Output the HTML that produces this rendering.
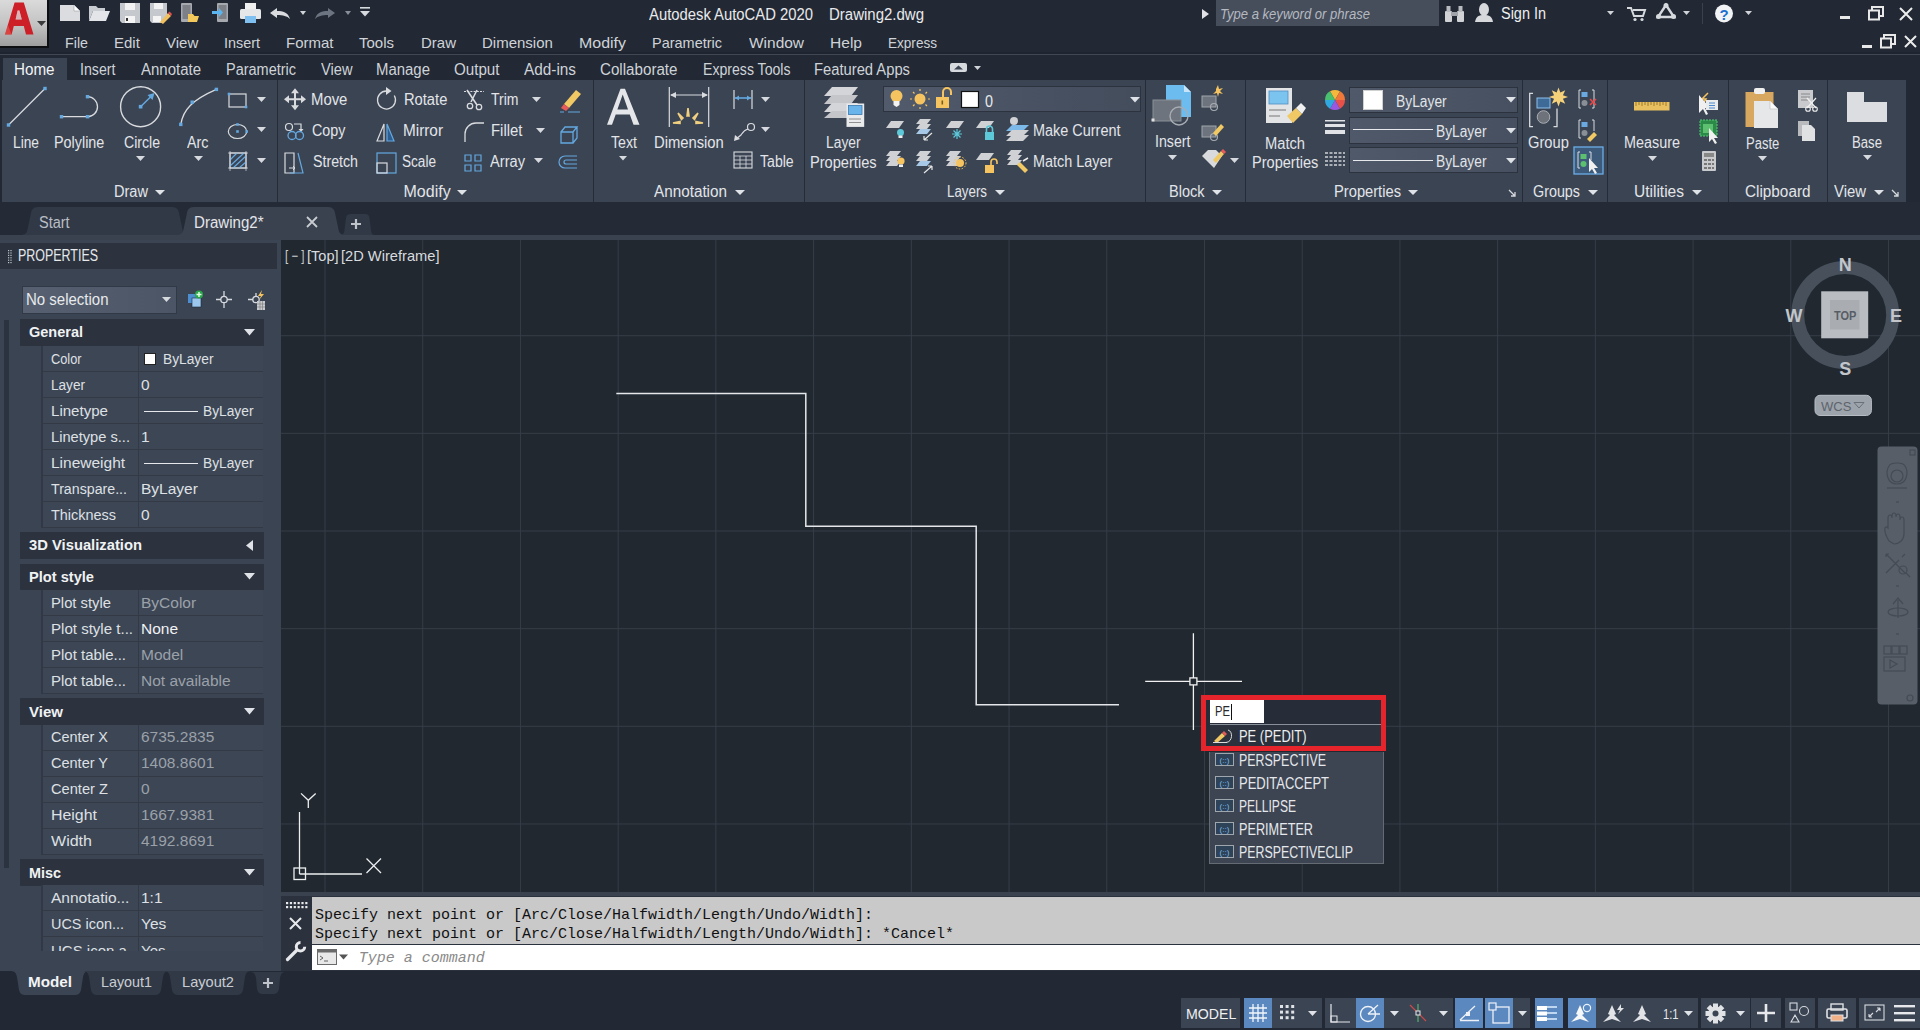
<!DOCTYPE html><html><head><meta charset="utf-8"><title>AutoCAD</title><style>
*{margin:0;padding:0;box-sizing:border-box}
html,body{width:1920px;height:1030px;overflow:hidden;background:#222933}
body{position:relative;font-family:"Liberation Sans",sans-serif}
.a{position:absolute}
.t{position:absolute;white-space:pre}
svg.a{overflow:visible}
</style></head><body>
<div class="a" style="left:0px;top:0px;width:1920px;height:1030px;background:#222934;"></div>
<div class="a" style="left:0px;top:0px;width:1920px;height:54px;background:#222934;"></div>
<div class="a" style="left:0px;top:52px;width:1920px;height:2px;background:#1f2530;"></div>
<div class="a" style="left:0px;top:54px;width:1920px;height:1px;background:#414853;"></div>
<div class="a" style="left:0px;top:0px;width:49px;height:48px;background:linear-gradient(#dadada 0%,#c2c2c2 55%,#9e9e9e 100%);border-right:2px solid #0d0f12;border-bottom:2px solid #0d0f12;"></div>
<svg class="a" style="left:0px;top:0px;" width="48" height="46" viewBox="0 0 48 46"><path d="M5 34.5 L14.6 2.4 H23.8 L33.5 34.5 H26 L23.8 26 H13.8 L11.6 34.5 Z M15.6 19.5 H21.8 L19.4 10.5 H17.6 Z" fill="#cc1f27" fill-rule="evenodd"/><path d="M15.6 19.5 H21.8 L19.4 10.5 H17.6 Z" fill="#e8a0a8" opacity=".55"/><path d="M5 34.5 L8 25 L11.6 34.5Z" fill="#e86a5a" opacity=".5"/></svg>
<svg class="a" style="left:37px;top:21px;" width="9" height="5" viewBox="0 0 9 5"><path d="M0 0H9L4.5 5Z" fill="#3a3a3a"/></svg>
<svg class="a" style="left:60px;top:4px;" width="21" height="17" viewBox="0 0 21 17"><path d="M0 1H14L20 7V17H0Z" fill="#dadcdf"/><path d="M14 1V7H20" fill="#fff" stroke="#9a9da2" stroke-width=".6"/></svg>
<svg class="a" style="left:89px;top:4px;" width="21" height="18" viewBox="0 0 21 18"><path d="M0 2H7L9 4H16V7H4L0 17Z" fill="#c9ccd0"/><path d="M4 7H21L17 17H0Z" fill="#e3e5e8"/></svg>
<svg class="a" style="left:120px;top:3px;" width="20" height="20" viewBox="0 0 20 20"><path d="M0 0H20V20H2L0 18Z" fill="#c5c8cc"/><rect x="5" y="0" width="10" height="7" fill="#f2f2f2"/><rect x="5" y="13" width="10" height="7" fill="#f4f4f4"/><rect x="6" y="15" width="2" height="3" fill="#333"/></svg>
<svg class="a" style="left:150px;top:3px;" width="21" height="20" viewBox="0 0 21 20"><path d="M0 0H17V13L12 20H2L0 18Z" fill="#c5c8cc"/><rect x="4" y="0" width="9" height="6" fill="#f2f2f2"/><rect x="3" y="13" width="8" height="6" fill="#f4f4f4"/><path d="M10 19 L18 10 L21 13 L13 21Z" fill="#f0c060"/><path d="M18 10 L19.5 8.5 L22 11 L21 13Z" fill="#e05050"/></svg>
<svg class="a" style="left:181px;top:3px;" width="18" height="20" viewBox="0 0 18 20"><rect x="0" y="0" width="11" height="19" rx="1" fill="#a6a9ae"/><rect x="1.5" y="2" width="8" height="14" fill="#7d8187"/><path d="M7 11H12L13.5 13H18L16 19H7Z" fill="#f2c95a"/></svg>
<svg class="a" style="left:212px;top:3px;" width="16" height="19" viewBox="0 0 16 19"><rect x="5" y="0" width="11" height="19" rx="1" fill="#a6a9ae"/><rect x="6.5" y="2" width="8" height="14" fill="#7d8187"/><path d="M0 8H7V5L11 9.5L7 14V11H0Z" fill="#5ab4f0"/></svg>
<svg class="a" style="left:240px;top:3px;" width="21" height="20" viewBox="0 0 21 20"><rect x="5" y="0" width="11" height="6" fill="#f0f0f0"/><rect x="0" y="6" width="21" height="10" rx="1.5" fill="#e6e7e9"/><rect x="5" y="13" width="11" height="7" fill="#7fc0f0"/></svg>
<svg class="a" style="left:270px;top:8px;" width="20" height="11" viewBox="0 0 20 11"><path d="M0 5 L7 0 V3 C13 3 18 4 20 11 C17 8 13 7 7 7 V10 Z" fill="#d9dbde"/></svg>
<svg class="a" style="left:299.5px;top:11px;" width="6" height="4" viewBox="0 0 6 4"><path d="M0 0H6L3.0 4Z" fill="#d0d3d8"/></svg>
<svg class="a" style="left:315px;top:8px;" width="20" height="11" viewBox="0 0 20 11"><path d="M20 5 L13 0 V3 C7 3 2 4 0 11 C3 8 7 7 13 7 V10 Z" fill="#6d7481"/></svg>
<svg class="a" style="left:344.5px;top:11px;" width="6" height="4" viewBox="0 0 6 4"><path d="M0 0H6L3.0 4Z" fill="#8a909a"/></svg>
<svg class="a" style="left:360px;top:7px;" width="10" height="10" viewBox="0 0 10 10"><rect x="0" y="0" width="10" height="1.6" fill="#d6d9de"/><path d="M0 4H10L5 9.5Z" fill="#d6d9de"/></svg>
<div class="t" style="left:649px;top:4.86px;line-height:19.20px;font-size:16px;color:#e9eaec;transform:scaleX(0.9265);transform-origin:0 0;">Autodesk AutoCAD 2020</div>
<div class="t" style="left:829px;top:4.86px;line-height:19.20px;font-size:16px;color:#e9eaec;transform:scaleX(0.9370);transform-origin:0 0;">Drawing2.dwg</div>
<svg class="a" style="left:1202px;top:9px;" width="7" height="10" viewBox="0 0 7 10"><path d="M0 0L7 5L0 10Z" fill="#e0e2e5"/></svg>
<div class="a" style="left:1216px;top:0px;width:223px;height:26px;background:#464e5c;"></div>
<div class="t" style="left:1220px;top:5.75px;line-height:16.80px;font-size:14px;color:#b5b9c0;font-style:italic;transform:scaleX(0.9327);transform-origin:0 0;">Type a keyword or phrase</div>
<svg class="a" style="left:1445px;top:6px;" width="19" height="16" viewBox="0 0 19 16"><rect x="0" y="5" width="7" height="11" rx="1" fill="#d0d2d6"/><rect x="12" y="5" width="7" height="11" rx="1" fill="#d0d2d6"/><rect x="1.5" y="0" width="4" height="6" fill="#b8bbc0"/><rect x="13.5" y="0" width="4" height="6" fill="#b8bbc0"/><rect x="6" y="6" width="7" height="4" fill="#a0a4aa"/></svg>
<svg class="a" style="left:1475px;top:3px;" width="18" height="19" viewBox="0 0 18 19"><ellipse cx="9" cy="6.5" rx="5" ry="6.5" fill="#d6d8dc"/><path d="M0 19 C1 13 4 12 9 12 C14 12 17 13 18 19Z" fill="#d6d8dc"/></svg>
<div class="t" style="left:1501px;top:4.36px;line-height:19.20px;font-size:16px;color:#eceef0;transform:scaleX(0.9034);transform-origin:0 0;">Sign In</div>
<svg class="a" style="left:1607px;top:11px;" width="7" height="4" viewBox="0 0 7 4"><path d="M0 0H7L3.5 4Z" fill="#d0d3d8"/></svg>
<svg class="a" style="left:1627px;top:7px;" width="19" height="14" viewBox="0 0 19 14"><path d="M0 1H4L7 9H16L18 3H6" fill="none" stroke="#d6d9de" stroke-width="2"/><circle cx="8" cy="12.5" r="1.6" fill="#d6d9de"/><circle cx="15" cy="12.5" r="1.6" fill="#d6d9de"/></svg>
<svg class="a" style="left:1656px;top:3px;" width="20" height="16" viewBox="0 0 20 16"><path d="M10 2 L2 14 H18 Z" fill="none" stroke="#d6d9de" stroke-width="2.4"/><circle cx="10" cy="2.5" r="2.5" fill="#d6d9de"/><circle cx="2.5" cy="13.5" r="2.5" fill="#d6d9de"/><circle cx="17.5" cy="13.5" r="2.5" fill="#d6d9de"/></svg>
<svg class="a" style="left:1683px;top:11px;" width="7" height="4" viewBox="0 0 7 4"><path d="M0 0H7L3.5 4Z" fill="#d0d3d8"/></svg>
<div class="a" style="left:1702px;top:3px;width:1px;height:21px;background:#3a414d;"></div>
<svg class="a" style="left:1715px;top:4px;" width="18" height="19" viewBox="0 0 18 19"><circle cx="9" cy="9.5" r="9" fill="#f2f3f5"/><text x="9" y="15.5" text-anchor="middle" font-family="Liberation Sans" font-weight="700" font-size="15" fill="#1d6fd0">?</text></svg>
<svg class="a" style="left:1744.5px;top:11px;" width="7" height="4" viewBox="0 0 7 4"><path d="M0 0H7L3.5 4Z" fill="#d0d3d8"/></svg>
<div class="a" style="left:1840px;top:16px;width:10px;height:3px;background:#e8e8e8;"></div>
<svg class="a" style="left:1868px;top:6px;" width="16" height="15" viewBox="0 0 16 15"><rect x="1" y="4.5" width="10" height="9" fill="none" stroke="#e8e8e8" stroke-width="2"/><path d="M4 4.5V1H15V10H11" fill="none" stroke="#e8e8e8" stroke-width="2"/></svg>
<svg class="a" style="left:1899px;top:7px;" width="14" height="14" viewBox="0 0 14 14"><path d="M1 1L13 13M13 1L1 13" stroke="#ececec" stroke-width="2"/></svg>
<div class="a" style="left:1862px;top:44.5px;width:10px;height:3px;background:#e8e8e8;"></div>
<svg class="a" style="left:1880px;top:33.5px;" width="16" height="15" viewBox="0 0 16 15"><rect x="1" y="4.5" width="10" height="9" fill="none" stroke="#e8e8e8" stroke-width="2"/><path d="M4 4.5V1H15V10H11" fill="none" stroke="#e8e8e8" stroke-width="2"/></svg>
<svg class="a" style="left:1904px;top:35px;" width="13" height="13" viewBox="0 0 13 13"><path d="M1 1L12 12M12 1L1 12" stroke="#ececec" stroke-width="2"/></svg>
<div class="t" style="left:65px;top:33.80px;line-height:18.00px;font-size:15px;color:#cfd3d8;transform:scaleX(0.9515);transform-origin:0 0;">File</div>
<div class="t" style="left:114px;top:33.80px;line-height:18.00px;font-size:15px;color:#cfd3d8;">Edit</div>
<div class="t" style="left:166px;top:33.80px;line-height:18.00px;font-size:15px;color:#cfd3d8;">View</div>
<div class="t" style="left:224px;top:33.80px;line-height:18.00px;font-size:15px;color:#cfd3d8;transform:scaleX(0.9596);transform-origin:0 0;">Insert</div>
<div class="t" style="left:286px;top:33.80px;line-height:18.00px;font-size:15px;color:#cfd3d8;">Format</div>
<div class="t" style="left:359px;top:33.80px;line-height:18.00px;font-size:15px;color:#cfd3d8;">Tools</div>
<div class="t" style="left:421px;top:33.80px;line-height:18.00px;font-size:15px;color:#cfd3d8;">Draw</div>
<div class="t" style="left:482px;top:33.80px;line-height:18.00px;font-size:15px;color:#cfd3d8;">Dimension</div>
<div class="t" style="left:579px;top:33.80px;line-height:18.00px;font-size:15px;color:#cfd3d8;transform:scaleX(1.0636);transform-origin:0 0;">Modify</div>
<div class="t" style="left:652px;top:33.80px;line-height:18.00px;font-size:15px;color:#cfd3d8;transform:scaleX(0.9651);transform-origin:0 0;">Parametric</div>
<div class="t" style="left:749px;top:33.80px;line-height:18.00px;font-size:15px;color:#cfd3d8;transform:scaleX(1.0307);transform-origin:0 0;">Window</div>
<div class="t" style="left:830px;top:33.80px;line-height:18.00px;font-size:15px;color:#cfd3d8;transform:scaleX(1.0370);transform-origin:0 0;">Help</div>
<div class="t" style="left:888px;top:33.80px;line-height:18.00px;font-size:15px;color:#cfd3d8;transform:scaleX(0.9043);transform-origin:0 0;">Express</div>
<div class="a" style="left:0px;top:56px;width:1920px;height:24px;background:#222935;"></div>
<div class="a" style="left:3px;top:58px;width:64px;height:22px;background:#3b4453;"></div>
<div class="t" style="left:14px;top:59.86px;line-height:19.20px;font-size:16px;color:#f2f4f6;transform:scaleX(0.9488);transform-origin:0 0;">Home</div>
<div class="t" style="left:80px;top:59.86px;line-height:19.20px;font-size:16px;color:#cfd3d8;transform:scaleX(0.8872);transform-origin:0 0;">Insert</div>
<div class="t" style="left:140.5px;top:59.86px;line-height:19.20px;font-size:16px;color:#cfd3d8;transform:scaleX(0.9366);transform-origin:0 0;">Annotate</div>
<div class="t" style="left:226px;top:59.86px;line-height:19.20px;font-size:16px;color:#cfd3d8;transform:scaleX(0.9049);transform-origin:0 0;">Parametric</div>
<div class="t" style="left:320.5px;top:59.86px;line-height:19.20px;font-size:16px;color:#cfd3d8;transform:scaleX(0.9159);transform-origin:0 0;">View</div>
<div class="t" style="left:376px;top:59.86px;line-height:19.20px;font-size:16px;color:#cfd3d8;transform:scaleX(0.9338);transform-origin:0 0;">Manage</div>
<div class="t" style="left:454px;top:59.86px;line-height:19.20px;font-size:16px;color:#cfd3d8;transform:scaleX(0.9473);transform-origin:0 0;">Output</div>
<div class="t" style="left:524px;top:59.86px;line-height:19.20px;font-size:16px;color:#cfd3d8;transform:scaleX(0.9585);transform-origin:0 0;">Add-ins</div>
<div class="t" style="left:600px;top:59.86px;line-height:19.20px;font-size:16px;color:#cfd3d8;transform:scaleX(0.9471);transform-origin:0 0;">Collaborate</div>
<div class="t" style="left:702.5px;top:59.86px;line-height:19.20px;font-size:16px;color:#cfd3d8;transform:scaleX(0.8811);transform-origin:0 0;">Express Tools</div>
<div class="t" style="left:814px;top:59.86px;line-height:19.20px;font-size:16px;color:#cfd3d8;transform:scaleX(0.9224);transform-origin:0 0;">Featured Apps</div>
<svg class="a" style="left:950px;top:63px;" width="18" height="10" viewBox="0 0 18 10"><rect x="0" y="0" width="17" height="9" rx="2" fill="#d6d9de"/><path d="M4 6.5L8.5 2.5L13 6.5Z" fill="#3b4453"/></svg>
<svg class="a" style="left:973.5px;top:66px;" width="7" height="4" viewBox="0 0 7 4"><path d="M0 0H7L3.5 4Z" fill="#d0d3d8"/></svg>
<div class="a" style="left:2px;top:80px;width:1904px;height:122px;background:#3b4453;"></div>
<div class="a" style="left:277px;top:80px;width:1px;height:122px;background:#252b37;"></div>
<div class="a" style="left:593px;top:80px;width:1px;height:122px;background:#252b37;"></div>
<div class="a" style="left:804px;top:80px;width:1px;height:122px;background:#252b37;"></div>
<div class="a" style="left:1145px;top:80px;width:1px;height:122px;background:#252b37;"></div>
<div class="a" style="left:1245px;top:80px;width:1px;height:122px;background:#252b37;"></div>
<div class="a" style="left:1522px;top:80px;width:1px;height:122px;background:#252b37;"></div>
<div class="a" style="left:1607px;top:80px;width:1px;height:122px;background:#252b37;"></div>
<div class="a" style="left:1728px;top:80px;width:1px;height:122px;background:#252b37;"></div>
<div class="a" style="left:1827px;top:80px;width:1px;height:122px;background:#252b37;"></div>
<div class="t" style="left:114px;top:182.36px;line-height:19.20px;font-size:16px;color:#e2e5e9;transform:scaleX(0.9105);transform-origin:0 0;">Draw</div>
<svg class="a" style="left:155px;top:190px;" width="10" height="5" viewBox="0 0 10 5"><path d="M0 0H10L5.0 5Z" fill="#dfe2e6"/></svg>
<div class="t" style="left:403.5px;top:182.36px;line-height:19.20px;font-size:16px;color:#e2e5e9;">Modify</div>
<svg class="a" style="left:457px;top:190px;" width="10" height="5" viewBox="0 0 10 5"><path d="M0 0H10L5.0 5Z" fill="#dfe2e6"/></svg>
<div class="t" style="left:654px;top:182.36px;line-height:19.20px;font-size:16px;color:#e2e5e9;transform:scaleX(0.9541);transform-origin:0 0;">Annotation</div>
<svg class="a" style="left:735px;top:190px;" width="10" height="5" viewBox="0 0 10 5"><path d="M0 0H10L5.0 5Z" fill="#dfe2e6"/></svg>
<div class="t" style="left:947px;top:182.36px;line-height:19.20px;font-size:16px;color:#e2e5e9;transform:scaleX(0.8328);transform-origin:0 0;">Layers</div>
<svg class="a" style="left:995px;top:190px;" width="10" height="5" viewBox="0 0 10 5"><path d="M0 0H10L5.0 5Z" fill="#dfe2e6"/></svg>
<div class="t" style="left:1169px;top:182.36px;line-height:19.20px;font-size:16px;color:#e2e5e9;transform:scaleX(0.9073);transform-origin:0 0;">Block</div>
<svg class="a" style="left:1212px;top:190px;" width="10" height="5" viewBox="0 0 10 5"><path d="M0 0H10L5.0 5Z" fill="#dfe2e6"/></svg>
<div class="t" style="left:1334px;top:182.36px;line-height:19.20px;font-size:16px;color:#e2e5e9;transform:scaleX(0.9188);transform-origin:0 0;">Properties</div>
<svg class="a" style="left:1408px;top:190px;" width="10" height="5" viewBox="0 0 10 5"><path d="M0 0H10L5.0 5Z" fill="#dfe2e6"/></svg>
<div class="t" style="left:1533px;top:182.36px;line-height:19.20px;font-size:16px;color:#e2e5e9;transform:scaleX(0.8958);transform-origin:0 0;">Groups</div>
<svg class="a" style="left:1587.5px;top:190px;" width="10" height="5" viewBox="0 0 10 5"><path d="M0 0H10L5.0 5Z" fill="#dfe2e6"/></svg>
<div class="t" style="left:1634px;top:182.36px;line-height:19.20px;font-size:16px;color:#e2e5e9;transform:scaleX(0.9697);transform-origin:0 0;">Utilities</div>
<svg class="a" style="left:1692px;top:190px;" width="10" height="5" viewBox="0 0 10 5"><path d="M0 0H10L5.0 5Z" fill="#dfe2e6"/></svg>
<div class="t" style="left:1745px;top:182.36px;line-height:19.20px;font-size:16px;color:#e2e5e9;transform:scaleX(0.9564);transform-origin:0 0;">Clipboard</div>
<div class="t" style="left:1834px;top:182.36px;line-height:19.20px;font-size:16px;color:#e2e5e9;transform:scaleX(0.9305);transform-origin:0 0;">View</div>
<svg class="a" style="left:1874px;top:190px;" width="10" height="5" viewBox="0 0 10 5"><path d="M0 0H10L5.0 5Z" fill="#dfe2e6"/></svg>
<svg class="a" style="left:1509px;top:190px;" width="7" height="7" viewBox="0 0 7 7"><path d="M0 0L6 6M6 2V6H2" stroke="#d6d9de" stroke-width="1.3" fill="none"/></svg>
<svg class="a" style="left:1892px;top:190px;" width="7" height="7" viewBox="0 0 7 7"><path d="M0 0L6 6M6 2V6H2" stroke="#d6d9de" stroke-width="1.3" fill="none"/></svg>
<svg class="a" style="left:0px;top:80px;" width="280" height="100" viewBox="0 0 280 100">
      <line x1="8.5" y1="45" x2="45" y2="8.5" stroke="#d9dbdf" stroke-width="1.3"/><rect x="6.8" y="43.3" width="3.4" height="3.4" fill="#64a8e0"/><rect x="43.3" y="6.8" width="3.4" height="3.4" fill="#64a8e0"/>
      <path d="M61.5 36.7H87.5A10 10 0 0 0 87.5 16.7" fill="none" stroke="#d9dbdf" stroke-width="1.3"/><rect x="59.8" y="35.0" width="3.4" height="3.4" fill="#64a8e0"/><rect x="85.8" y="35.0" width="3.4" height="3.4" fill="#64a8e0"/><rect x="85.8" y="15.0" width="3.4" height="3.4" fill="#64a8e0"/>
      <circle cx="140.6" cy="26.7" r="20" fill="none" stroke="#d9dbdf" stroke-width="1.4"/>
      <line x1="140.6" y1="26.7" x2="152" y2="15.5" stroke="#64a8e0" stroke-width="1.5"/><path d="M154.5 13 L147.5 15 L152.5 20 Z" fill="#64a8e0"/><rect x="138.79999999999998" y="24.9" width="3.6" height="3.6" fill="#64a8e0"/>
      <path d="M180.8 44.4 C183 30 192 20 216.4 9.4" fill="none" stroke="#d9dbdf" stroke-width="1.3"/><rect x="179.10000000000002" y="42.699999999999996" width="3.4" height="3.4" fill="#64a8e0"/><rect x="190.5" y="20.5" width="3.4" height="3.4" fill="#64a8e0"/><rect x="214.70000000000002" y="7.7" width="3.4" height="3.4" fill="#64a8e0"/>
      <rect x="229" y="14" width="17" height="13" fill="none" stroke="#d9dbdf" stroke-width="1.2"/><rect x="227.7" y="12.7" width="2.6" height="2.6" fill="#64a8e0"/><rect x="244.7" y="25.7" width="2.6" height="2.6" fill="#64a8e0"/>
      <ellipse cx="237.5" cy="51.5" rx="9.2" ry="7" fill="none" stroke="#d9dbdf" stroke-width="1.2"/><rect x="236.2" y="43.2" width="2.6" height="2.6" fill="#64a8e0"/><rect x="236.2" y="50.2" width="2.6" height="2.6" fill="#64a8e0"/><rect x="245.39999999999998" y="50.2" width="2.6" height="2.6" fill="#64a8e0"/>
      <rect x="230" y="73" width="16" height="15" fill="none" stroke="#d9dbdf" stroke-width="1.2"/>
      <path d="M230 86L244 73M233 88L246 76M230 80L237 73M239 88L246 82" stroke="#64a8e0" stroke-width="1.2"/>
      <path d="M228 73H248M228 88H248M230 71V91M246 71V91" stroke="#d9dbdf" stroke-width=".7"/>
    </svg>
<div class="t" style="left:13.4px;top:132.86px;line-height:19.20px;font-size:16px;color:#e2e5e9;transform:scaleX(0.8595);transform-origin:0 0;">Line</div>
<div class="t" style="left:54.4px;top:132.86px;line-height:19.20px;font-size:16px;color:#e2e5e9;transform:scaleX(0.8977);transform-origin:0 0;">Polyline</div>
<div class="t" style="left:123.7px;top:132.86px;line-height:19.20px;font-size:16px;color:#e2e5e9;transform:scaleX(0.8804);transform-origin:0 0;">Circle</div>
<div class="t" style="left:187.4px;top:132.86px;line-height:19.20px;font-size:16px;color:#e2e5e9;transform:scaleX(0.8917);transform-origin:0 0;">Arc</div>
<svg class="a" style="left:136px;top:155.5px;" width="9" height="5" viewBox="0 0 9 5"><path d="M0 0H9L4.5 5Z" fill="#d6d9de"/></svg>
<svg class="a" style="left:193.5px;top:155.5px;" width="9" height="5" viewBox="0 0 9 5"><path d="M0 0H9L4.5 5Z" fill="#d6d9de"/></svg>
<svg class="a" style="left:256.5px;top:97px;" width="9" height="5" viewBox="0 0 9 5"><path d="M0 0H9L4.5 5Z" fill="#d6d9de"/></svg>
<svg class="a" style="left:256.5px;top:127px;" width="9" height="5" viewBox="0 0 9 5"><path d="M0 0H9L4.5 5Z" fill="#d6d9de"/></svg>
<svg class="a" style="left:256.5px;top:158px;" width="9" height="5" viewBox="0 0 9 5"><path d="M0 0H9L4.5 5Z" fill="#d6d9de"/></svg>
<svg class="a" style="left:278px;top:80px;" width="320" height="100" viewBox="0 0 320 100">
      <path d="M8 19.3H26M17 10.3V28.3" stroke="#d9dbdf" stroke-width="2"/>
      <path d="M6 19.3L11 15.3V23.3Z M28 19.3L23 15.3V23.3Z M17 8.3L13 13.3H21Z M17 30.3L13 25.3H21Z" fill="#d9dbdf"/>
      <path d="M116.3 15.5 A9 9 0 1 1 108.5 11" fill="none" stroke="#d9dbdf" stroke-width="1.3"/><path d="M108 7 L113.5 11 L108 15Z" fill="#d9dbdf"/>
      <path d="M186 11.5H206" stroke="#d9dbdf" stroke-width="1.2" stroke-dasharray="2 1.2"/><path d="M189 10 L199 25 M199 10 L193 22" stroke="#d9dbdf" stroke-width="1.6"/><circle cx="192" cy="26" r="2.7" fill="none" stroke="#d9dbdf" stroke-width="1.3"/><circle cx="201" cy="27" r="2.7" fill="none" stroke="#d9dbdf" stroke-width="1.3"/>
      <path d="M286 24 L298 10 L303 14 L291 28Z" fill="#f0c864"/><path d="M283 28 L286 24 L291 28 L288 31Z" fill="#e85a5a"/><path d="M282 32H286M290 32H302" stroke="#64a8e0" stroke-width="1.2"/>
      <circle cx="11" cy="47" r="3.5" fill="none" stroke="#d9dbdf" stroke-width="1.2"/><path d="M16 44H23V51" fill="none" stroke="#d9dbdf" stroke-width="1.2"/><path d="M20.5 49L23 52L25.5 49Z" fill="#d9dbdf"/>
      <circle cx="14" cy="55.5" r="4" fill="none" stroke="#64a8e0" stroke-width="1.3"/><circle cx="21.5" cy="55.5" r="4" fill="none" stroke="#64a8e0" stroke-width="1.3"/>
      <path d="M99 61L106 44V61Z" fill="none" stroke="#d9dbdf" stroke-width="1.2"/><path d="M109 44L116 61H109Z" fill="#2e5d8f" stroke="#64a8e0" stroke-width="1.2"/>
      <path d="M187 62V54A11 11 0 0 1 198 43H206" fill="none" stroke="#d9dbdf" stroke-width="1.3"/>
      <path d="M283 52H295V63H283Z M283 52L287 47H299L295 52 M299 47V58L295 63" fill="none" stroke="#64a8e0" stroke-width="1.3"/>
      <path d="M7 93V73H16V93Z" fill="none" stroke="#d9dbdf" stroke-width="1.2"/><path d="M20 73L25 93H12" fill="none" stroke="#64a8e0" stroke-width="1.2"/><path d="M11 88H17L15 86M17 88L15 90" stroke="#d9dbdf" stroke-width="1" fill="none"/>
      <rect x="99" y="73" width="19" height="20" fill="none" stroke="#64a8e0" stroke-width="1.2"/><rect x="99" y="83" width="10" height="10" fill="none" stroke="#d9dbdf" stroke-width="1.2"/>
      <path d="M187 75h6v6h-6zM197 75h6v6h-6zM187 85h6v6h-6zM197 85h6v6h-6z" fill="none" stroke="#64a8e0" stroke-width="1.2"/>
      <path d="M299 76H287A6 6 0 0 0 287 88H299 M299 80H288A2 2 0 0 0 288 84H299" fill="none" stroke="#64a8e0" stroke-width="1.2"/>
    </svg>
<div class="t" style="left:311.3px;top:90.36px;line-height:19.20px;font-size:16px;color:#e2e5e9;transform:scaleX(0.9304);transform-origin:0 0;">Move</div>
<div class="t" style="left:403.5px;top:90.36px;line-height:19.20px;font-size:16px;color:#e2e5e9;transform:scaleX(0.9185);transform-origin:0 0;">Rotate</div>
<div class="t" style="left:491px;top:90.36px;line-height:19.20px;font-size:16px;color:#e2e5e9;transform:scaleX(0.8761);transform-origin:0 0;">Trim</div>
<div class="t" style="left:312.3px;top:121.36px;line-height:19.20px;font-size:16px;color:#e2e5e9;transform:scaleX(0.8940);transform-origin:0 0;">Copy</div>
<div class="t" style="left:402.7px;top:121.36px;line-height:19.20px;font-size:16px;color:#e2e5e9;transform:scaleX(0.9577);transform-origin:0 0;">Mirror</div>
<div class="t" style="left:491.3px;top:121.36px;line-height:19.20px;font-size:16px;color:#e2e5e9;transform:scaleX(0.9295);transform-origin:0 0;">Fillet</div>
<div class="t" style="left:312.7px;top:152.36px;line-height:19.20px;font-size:16px;color:#e2e5e9;transform:scaleX(0.8878);transform-origin:0 0;">Stretch</div>
<div class="t" style="left:402px;top:152.36px;line-height:19.20px;font-size:16px;color:#e2e5e9;transform:scaleX(0.8493);transform-origin:0 0;">Scale</div>
<div class="t" style="left:490px;top:152.36px;line-height:19.20px;font-size:16px;color:#e2e5e9;transform:scaleX(0.9154);transform-origin:0 0;">Array</div>
<svg class="a" style="left:532px;top:97px;" width="9" height="5" viewBox="0 0 9 5"><path d="M0 0H9L4.5 5Z" fill="#d6d9de"/></svg>
<svg class="a" style="left:536px;top:128px;" width="9" height="5" viewBox="0 0 9 5"><path d="M0 0H9L4.5 5Z" fill="#d6d9de"/></svg>
<svg class="a" style="left:534px;top:158px;" width="9" height="5" viewBox="0 0 9 5"><path d="M0 0H9L4.5 5Z" fill="#d6d9de"/></svg>
<svg class="a" style="left:593px;top:80px;" width="215" height="100" viewBox="0 0 215 100">
      <path d="M14 44.7 L27.5 8.7 H32 L46.5 44.7 H40.5 L36.8 34.5 H22.7 L19 44.7 Z M24.4 29.5 H35 L29.7 14.5 Z" fill="#e4e6e9"/>
      <path d="M76.3 7V47M115.7 7V47" stroke="#d9dbdf" stroke-width="1.2"/>
      <path d="M78 15H114" stroke="#d9dbdf" stroke-width="1.2"/><path d="M77 15L83 12V18Z M115 15L109 12V18Z" fill="#d9dbdf"/>
      <path d="M95 28L96 36H94Z M85 33L90 38L88.5 39.5Z M105 33L100 38L101.5 39.5Z M80 43L87 41.5V43.5Z M110 43L103 41.5V43.5Z" fill="#f0d080" stroke="#f0d080" stroke-width="1.6"/>
      <path d="M141 10V29M159 10V29" stroke="#d9dbdf" stroke-width="1.2"/><path d="M142 18H158" stroke="#64a8e0" stroke-width="1.6"/><path d="M142 18L146 15.5V20.5Z M158 18L154 15.5V20.5Z" fill="#64a8e0"/>
      <circle cx="158" cy="47" r="3.5" fill="none" stroke="#d9dbdf" stroke-width="1.2"/><path d="M155 49 C151 50 150 52 148 55 L143 59" fill="none" stroke="#d9dbdf" stroke-width="1.2"/><path d="M141 61 L142 55 L147 59 Z" fill="#d9dbdf"/>
      <rect x="141" y="72" width="18" height="16" fill="none" stroke="#d9dbdf" stroke-width="1.1"/><path d="M141 76H159M141 80H159M141 84H159M147 76V88M153 76V88" stroke="#d9dbdf" stroke-width=".8"/>
    </svg>
<div class="t" style="left:611px;top:133.36px;line-height:19.20px;font-size:16px;color:#e2e5e9;transform:scaleX(0.8860);transform-origin:0 0;">Text</div>
<svg class="a" style="left:619px;top:156px;" width="8" height="4.5" viewBox="0 0 8 4.5"><path d="M0 0H8L4.0 4.5Z" fill="#d6d9de"/></svg>
<div class="t" style="left:653.8px;top:133.36px;line-height:19.20px;font-size:16px;color:#e2e5e9;transform:scaleX(0.9234);transform-origin:0 0;">Dimension</div>
<div class="t" style="left:759.8px;top:152.36px;line-height:19.20px;font-size:16px;color:#e2e5e9;transform:scaleX(0.8810);transform-origin:0 0;">Table</div>
<svg class="a" style="left:761px;top:97px;" width="9" height="5" viewBox="0 0 9 5"><path d="M0 0H9L4.5 5Z" fill="#d6d9de"/></svg>
<svg class="a" style="left:761px;top:127px;" width="9" height="5" viewBox="0 0 9 5"><path d="M0 0H9L4.5 5Z" fill="#d6d9de"/></svg>
<svg class="a" style="left:804px;top:80px;" width="345" height="100" viewBox="0 0 345 100">
      <path d="M28 7 H54 L47 16 H20Z" fill="#d3d5d8"/><path d="M28 15 H54 L47 24 H20Z" fill="#c4c6ca"/><path d="M28 23 H54 L47 32 H20Z" fill="#d3d5d8"/><path d="M28 31 H50 L44 38 H20Z" fill="#c4c6ca"/>
      <rect x="42.5" y="23.5" width="17.7" height="23.4" fill="#e9eaec"/><rect x="44.5" y="25.5" width="13.5" height="9" fill="#6ab4ec" stroke="#3a78b0" stroke-width=".8"/><path d="M45 39H57M45 42.5H57" stroke="#777" stroke-width=".8"/>
    </svg>
<div class="t" style="left:826.4px;top:133.16px;line-height:19.20px;font-size:16px;color:#e2e5e9;transform:scaleX(0.8643);transform-origin:0 0;">Layer</div>
<div class="t" style="left:810px;top:152.86px;line-height:19.20px;font-size:16px;color:#e2e5e9;transform:scaleX(0.9133);transform-origin:0 0;">Properties</div>
<div class="a" style="left:883px;top:86px;width:258px;height:26px;background:linear-gradient(90deg,#515b6b,#465060 70%,#444d5c);border:1px solid #2c333f;"></div>
<svg class="a" style="left:886px;top:86px;" width="100" height="26" viewBox="0 0 100 26">
      <circle cx="10.5" cy="10" r="6" fill="#f5c460"/><path d="M7.5 15H13.5V19L10.5 21L7.5 19Z" fill="#f2f2f2"/>
      <circle cx="34" cy="13" r="5.5" fill="#f5c460"/><path d="M34 3V5M34 21V23M24 13H26M42 13H44M27 6L28.5 7.5M41 6L39.5 7.5M27 20L28.5 18.5M41 20L39.5 18.5" stroke="#f5c460" stroke-width="1.2"/>
      <rect x="50" y="11" width="13" height="11" fill="#f5c460"/><path d="M57 11V6A4 4 0 0 1 65 6V9" fill="none" stroke="#f5c460" stroke-width="2"/><rect x="55.5" y="14.5" width="1.6" height="4" fill="#7a5a20"/>
      <rect x="75.5" y="5.5" width="17" height="16" fill="#fff" stroke="#111" stroke-width="1.2"/>
    </svg>
<div class="t" style="left:985px;top:91.86px;line-height:19.20px;font-size:16px;color:#e8eaed;transform:scaleX(0.8982);transform-origin:0 0;">0</div>
<svg class="a" style="left:1130px;top:97px;" width="10" height="5.5" viewBox="0 0 10 5.5"><path d="M0 0H10L5.0 5.5Z" fill="#dfe2e6"/></svg>
<svg class="a" style="left:884.5px;top:115px;" width="270" height="65" viewBox="0 0 270 65">
      <path d="M6 6 H19 L14 13 H1Z" fill="#cfd1d4"/><circle cx="15.5" cy="17.5" r="3.5" fill="#5cc8d8"/><path d="M13.5 20.5H17.5V23H13.5Z" fill="#eee"/>
      <path d="M35 4 H46 L42 9 H31Z M35 9 H46 L42 14 H31Z" fill="#cfd1d4"/><path d="M35 14 H46 L42 19 H31Z" fill="#a8c8e8"/><path d="M39 25 L47 18M39 25V21M39 25H43" stroke="#e6e6e6" stroke-width="1.2" fill="none"/>
      <path d="M66 6 H79 L74 13 H61Z" fill="#cfd1d4"/><path d="M72 14V24M67 19H77M68.5 15.5L75.5 22.5M75.5 15.5L68.5 22.5" stroke="#5cc8d8" stroke-width="1.2"/>
      <path d="M96 6 H109 L104 13 H91Z" fill="#cfd1d4"/><rect x="100" y="17" width="9" height="8" fill="#5cc8d8"/><path d="M101.5 17V14A3 3 0 0 1 107.5 14V17" fill="none" stroke="#5cc8d8" stroke-width="1.6"/>
      <circle cx="129" cy="6" r="4" fill="#cfd1d4"/><path d="M127 10 H144 L138 16 H121Z" fill="#7cb8e8"/><path d="M127 15 H144 L138 21 H121Z M127 20 H144 L138 26 H121Z" fill="#cfd1d4"/>
      <path d="M5 36 H16 L12 41 H1Z M5 41 H16 L12 46 H1Z" fill="#cfd1d4"/><path d="M5 46 H16 L12 51 H1Z" fill="#cfd1d4"/><circle cx="16" cy="46" r="3.6" fill="#f5c460"/><path d="M14 49.5H18V52H14Z" fill="#eee"/>
      <path d="M35 36 H46 L42 41 H31Z M35 41 H46 L42 46 H31Z" fill="#cfd1d4"/><path d="M35 46 H46 L42 51 H31Z" fill="#a8c8e8"/><path d="M39 58 L47 51M47 51V55M47 51H43" stroke="#e6e6e6" stroke-width="1.2" fill="none"/>
      <path d="M65 36 H76 L72 41 H61Z M65 41 H76 L72 46 H61Z" fill="#cfd1d4"/><path d="M65 46 H76 L72 51 H61Z" fill="#cfd1d4"/><circle cx="75" cy="48" r="4" fill="#f5c460"/><circle cx="75" cy="48" r="6" fill="none" stroke="#f5c460" stroke-width="1" stroke-dasharray="1.5 1.5"/>
      <path d="M96 38 H109 L104 45 H91Z" fill="#cfd1d4"/><rect x="100" y="50" width="9" height="8" fill="#f5c460"/><path d="M106 50V47A3 3 0 0 1 112 47V49" fill="none" stroke="#f5c460" stroke-width="1.6"/>
      <path d="M126 35 H137 L133 40 H122Z M126 40 H137 L133 45 H122Z" fill="#cfd1d4"/><path d="M126 45 H137 L133 50 H122Z" fill="#cfd1d4"/><path d="M135 47L143 55L140 58L132 50Z" fill="#f0c864"/><path d="M138 46L143 43" stroke="#eee" stroke-width="1.5"/>
    </svg>
<div class="t" style="left:1033.3px;top:121.36px;line-height:19.20px;font-size:16px;color:#e2e5e9;transform:scaleX(0.9028);transform-origin:0 0;">Make Current</div>
<div class="t" style="left:1033.3px;top:152.36px;line-height:19.20px;font-size:16px;color:#e2e5e9;transform:scaleX(0.9007);transform-origin:0 0;">Match Layer</div>
<svg class="a" style="left:1146px;top:80px;" width="100" height="100" viewBox="0 0 100 100">
      <path d="M20 5 H38 L45 12 V37 H20Z" fill="#6cbcf0"/><path d="M38 5 V12 H45" fill="#c8e4f8"/>
      <rect x="7" y="20" width="28" height="21" fill="#6e747d" stroke="#8a9098" stroke-width="1"/>
      <circle cx="33" cy="36" r="9" fill="none" stroke="#a8adb4" stroke-width="1.4"/><rect x="5.5" y="38.5" width="3" height="3" fill="#e0e0e0"/>
      <rect x="56" y="16" width="14" height="11" fill="#6e747d" stroke="#a0a5ac" stroke-width="1"/><circle cx="68" cy="27" r="3.5" fill="none" stroke="#a8adb4" stroke-width="1.1"/><path d="M70 9L72 5L73 9L77 8L74 11L77 14L73 13L72 17L71 13L67 14L70 11Z" fill="#f5c460"/>
      <rect x="56" y="46" width="14" height="11" fill="#6e747d" stroke="#a0a5ac" stroke-width="1"/><circle cx="68" cy="57" r="3.5" fill="none" stroke="#a8adb4" stroke-width="1.1"/><path d="M67 53L75 44L78 47L70 56Z" fill="#f0c864"/>
      <path d="M56 76 L62 70 H70 L76 76 L68 88 Z" fill="#d8dadd"/><path d="M67 80L75 71L78 74L70 83Z" fill="#f0c864"/><path d="M75 71L77 69L80 72L78 74Z" fill="#e85a5a"/>
    </svg>
<div class="t" style="left:1154.5px;top:132.36px;line-height:19.20px;font-size:16px;color:#e2e5e9;transform:scaleX(0.8847);transform-origin:0 0;">Insert</div>
<svg class="a" style="left:1168px;top:154.5px;" width="9" height="5" viewBox="0 0 9 5"><path d="M0 0H9L4.5 5Z" fill="#d6d9de"/></svg>
<svg class="a" style="left:1229.5px;top:158px;" width="9" height="5" viewBox="0 0 9 5"><path d="M0 0H9L4.5 5Z" fill="#d6d9de"/></svg>
<svg class="a" style="left:1250px;top:80px;" width="100" height="100" viewBox="0 0 100 100">
      <rect x="16" y="8" width="26" height="35" fill="#e3e4e6"/><rect x="19" y="11" width="19" height="13" fill="#7cc4f0" stroke="#4e8ec0" stroke-width=".8"/>
      <path d="M19 30H36M19 36H30" stroke="#777" stroke-width="1"/>
      <path d="M37 36 L46 28 L52 34 L43 43Z" fill="#f0c864"/><path d="M46 28L51 23L56 28L52 34Z" fill="#f0f0f0"/>
    </svg>
<div class="t" style="left:1264.7px;top:133.66px;line-height:19.20px;font-size:16px;color:#e2e5e9;transform:scaleX(0.9179);transform-origin:0 0;">Match</div>
<div class="t" style="left:1251.7px;top:153.46px;line-height:19.20px;font-size:16px;color:#e2e5e9;transform:scaleX(0.9092);transform-origin:0 0;">Properties</div>
<svg class="a" style="left:1324px;top:89px;" width="22" height="22" viewBox="0 0 22 22"><g transform="translate(11,11)"><path d="M0 0L-5.00 -8.66A10 10 0 0 1 5.00 -8.66Z" fill="#f5b83d"/><path d="M0 0L5.00 -8.66A10 10 0 0 1 10.00 0.00Z" fill="#f07838"/><path d="M0 0L10.00 0.00A10 10 0 0 1 5.00 8.66Z" fill="#e8504a"/><path d="M0 0L5.00 8.66A10 10 0 0 1 -5.00 8.66Z" fill="#9858e0"/><path d="M0 0L-5.00 8.66A10 10 0 0 1 -10.00 0.00Z" fill="#30a8e0"/><path d="M0 0L-10.00 0.00A10 10 0 0 1 -5.00 -8.66Z" fill="#48c070"/></g></svg>
<svg class="a" style="left:1325px;top:119px;" width="21" height="22" viewBox="0 0 21 22"><rect x="0" y="1" width="20" height="1.5" fill="#e0e2e5"/><rect x="0" y="5" width="20" height="3" fill="#e0e2e5"/><rect x="0" y="11" width="20" height="4" fill="#e0e2e5"/></svg>
<svg class="a" style="left:1325px;top:152px;" width="20" height="16" viewBox="0 0 20 16"><path d="M0 1H20M0 5H20M0 9H20M0 13H20" stroke="#d0d3d8" stroke-width="1.4" stroke-dasharray="3 1.5"/></svg>
<div class="a" style="left:1349px;top:86.6px;width:169px;height:26.5px;background:linear-gradient(90deg,#4f5969,#465060);border:1px solid #2c333f;"></div>
<div class="a" style="left:1349px;top:117px;width:169px;height:26.5px;background:linear-gradient(90deg,#4f5969,#465060);border:1px solid #2c333f;"></div>
<div class="a" style="left:1349px;top:146.8px;width:169px;height:26.5px;background:linear-gradient(90deg,#4f5969,#465060);border:1px solid #2c333f;"></div>
<div class="a" style="left:1363px;top:90px;width:20px;height:20px;background:#ffffff;border:1px solid #d0d0d0;"></div>
<div class="t" style="left:1395.5px;top:91.86px;line-height:19.20px;font-size:16px;color:#e2e5e9;transform:scaleX(0.8637);transform-origin:0 0;">ByLayer</div>
<div class="a" style="left:1353px;top:129px;width:80px;height:1.3px;background:#e6e8eb;"></div>
<div class="a" style="left:1353px;top:160px;width:80px;height:1.3px;background:#e6e8eb;"></div>
<div class="t" style="left:1435.5px;top:121.86px;line-height:19.20px;font-size:16px;color:#e2e5e9;transform:scaleX(0.8603);transform-origin:0 0;">ByLayer</div>
<div class="t" style="left:1435.5px;top:151.86px;line-height:19.20px;font-size:16px;color:#e2e5e9;transform:scaleX(0.8603);transform-origin:0 0;">ByLayer</div>
<svg class="a" style="left:1506px;top:97px;" width="10" height="5.5" viewBox="0 0 10 5.5"><path d="M0 0H10L5.0 5.5Z" fill="#dfe2e6"/></svg>
<svg class="a" style="left:1506px;top:128px;" width="10" height="5.5" viewBox="0 0 10 5.5"><path d="M0 0H10L5.0 5.5Z" fill="#dfe2e6"/></svg>
<svg class="a" style="left:1506px;top:158px;" width="10" height="5.5" viewBox="0 0 10 5.5"><path d="M0 0H10L5.0 5.5Z" fill="#dfe2e6"/></svg>
<svg class="a" style="left:1525px;top:80px;" width="85" height="100" viewBox="0 0 85 100">
      <path d="M8 13.3H4.7V46.7H8M28.5 46.7H32V28.5" fill="none" stroke="#d9dbdf" stroke-width="1.3"/>
      <rect x="12" y="18" width="13" height="10" fill="#3e6a98" stroke="#8ec0ec" stroke-width="1"/><circle cx="18.5" cy="37" r="6.3" fill="#6e737b" stroke="#a8acb2" stroke-width="1"/>
      <path d="M33.50 7.50 L35.34 12.57 L40.22 10.28 L37.93 15.16 L43.00 17.00 L37.93 18.84 L40.22 23.72 L35.34 21.43 L33.50 26.50 L31.66 21.43 L26.78 23.72 L29.07 18.84 L24.00 17.00 L29.07 15.16 L26.78 10.28 L31.66 12.57Z" fill="#f5d27a"/>
      <path d="M56 10H54V28H56M67 10H69V28H67" fill="none" stroke="#d9dbdf" stroke-width="1"/><rect x="56.5" y="12" width="6" height="5" fill="#6aaae0"/><circle cx="59.5" cy="23" r="3" fill="#8a8f96"/><path d="M65 19L71 25M71 19L65 25" stroke="#e84848" stroke-width="1.6"/>
      <path d="M56 40H54V58H56M67 40H69V51" fill="none" stroke="#d9dbdf" stroke-width="1"/><rect x="56.5" y="42" width="6" height="5" fill="#6aaae0"/><circle cx="59.5" cy="53" r="3" fill="#8a8f96"/><path d="M62 59L69 52L72 55L65 62Z" fill="#f0c864"/>
      <rect x="49" y="67" width="29" height="27" fill="#3e5a7a" stroke="#6aaee8" stroke-width="1.3"/>
      <path d="M55 72H53V88H55M64 72H66V80" fill="none" stroke="#d9dbdf" stroke-width="1"/><rect x="55.5" y="74" width="6" height="5" fill="#5cc070"/><circle cx="58.5" cy="84" r="3" fill="#5cc070"/><path d="M64 78V92L67 89L70 94L72 93L69 88H73Z" fill="#f0f0f0"/>
    </svg>
<div class="t" style="left:1528px;top:133.36px;line-height:19.20px;font-size:16px;color:#e2e5e9;transform:scaleX(0.9175);transform-origin:0 0;">Group</div>
<svg class="a" style="left:1610px;top:80px;" width="120" height="100" viewBox="0 0 120 100">
      <rect x="24" y="22" width="35.5" height="8.5" fill="#e8c060"/><path d="M26 22V26M29 22V25M32 22V26M35 22V25M38 22V26M41 22V25M44 22V26M47 22V25M50 22V26M53 22V25M56 22V26" stroke="#8a6a20" stroke-width=".8"/>
      <path d="M98 13L92 19H96L93 24" fill="none" stroke="#f5c460" stroke-width="1.5"/><path d="M89 15V33L93 29L96 35L98 34L95 28H100Z" fill="#f0f0f0"/><rect x="96" y="20" width="12" height="10" fill="#e8eaec"/><path d="M99 23H105M99 25.5H105M99 28H105" stroke="#4a8ad0" stroke-width="1"/>
      <rect x="90" y="40" width="17" height="16" fill="#2c8a48" stroke="#58c878" stroke-dasharray="2 1" stroke-width="1"/><rect x="93" y="44" width="10" height="9" fill="#5cc070"/><path d="M99 48V62L102 59L105 64L107 63L104 58H108Z" fill="#f0f0f0"/>
      <rect x="92" y="71" width="14" height="20" rx="1" fill="#c8cacd"/><rect x="94" y="73" width="10" height="4" fill="#888"/><path d="M94 79h3v2h-3zM98 79h3v2h-3zM102 79h2v2h-2zM94 83h3v2h-3zM98 83h3v2h-3zM102 83h2v2h-2zM94 87h3v2h-3zM98 87h3v2h-3zM102 87h2v2h-2z" fill="#777"/>
    </svg>
<div class="t" style="left:1624px;top:133.36px;line-height:19.20px;font-size:16px;color:#e2e5e9;transform:scaleX(0.8996);transform-origin:0 0;">Measure</div>
<svg class="a" style="left:1647.5px;top:155.5px;" width="9" height="5" viewBox="0 0 9 5"><path d="M0 0H9L4.5 5Z" fill="#d6d9de"/></svg>
<svg class="a" style="left:1730px;top:80px;" width="100" height="100" viewBox="0 0 100 100">
      <rect x="15.5" y="12" width="28" height="35" fill="#d8a860"/><rect x="24" y="8" width="11" height="6" rx="2" fill="#f0f0f0"/>
      <path d="M24 21H40L48 29V48H24Z" fill="#e6e7e9"/><path d="M40 21V29H48" fill="#fafafa" stroke="#bbb" stroke-width=".6"/>
      <rect x="68" y="10" width="15" height="18" fill="#c8cacd"/><path d="M71 14H80M71 17H80M71 20H78" stroke="#888" stroke-width="1"/><path d="M77 18L86 28M86 18L77 28" stroke="#f0f0f0" stroke-width="1.2"/><circle cx="78" cy="29" r="2.3" fill="none" stroke="#f0f0f0" stroke-width="1.1"/><circle cx="85" cy="29" r="2.3" fill="none" stroke="#f0f0f0" stroke-width="1.1"/>
      <rect x="68" y="41" width="11" height="15" fill="#b8babd"/><path d="M72 45H81L85 49V61H72Z" fill="#e0e1e3"/>
    </svg>
<div class="t" style="left:1745.5px;top:133.86px;line-height:19.20px;font-size:16px;color:#e2e5e9;transform:scaleX(0.8137);transform-origin:0 0;">Paste</div>
<svg class="a" style="left:1758px;top:156px;" width="9" height="5" viewBox="0 0 9 5"><path d="M0 0H9L4.5 5Z" fill="#d6d9de"/></svg>
<svg class="a" style="left:1845px;top:90px;" width="45" height="34" viewBox="0 0 45 34"><path d="M2 2H19V12H42V32H2Z" fill="#dcdde0"/></svg>
<div class="t" style="left:1851.8px;top:133.36px;line-height:19.20px;font-size:16px;color:#e2e5e9;transform:scaleX(0.8226);transform-origin:0 0;">Base</div>
<svg class="a" style="left:1862.5px;top:154.5px;" width="9" height="5" viewBox="0 0 9 5"><path d="M0 0H9L4.5 5Z" fill="#d6d9de"/></svg>
<div class="a" style="left:0px;top:202px;width:1920px;height:33px;background:#242b37;"></div>
<div class="a" style="left:0px;top:235px;width:1920px;height:5px;background:#3a4250;"></div>
<svg class="a" style="left:0px;top:205px;" width="380" height="31" viewBox="0 0 380 31">
      <path d="M20 30 C26 30 27 28 28 22 L31 8 C32 3 34 2 40 2 H170 C176 2 178 3 179 8 L182 22 C183 28 184 30 190 30 Z" fill="#313946"/>
      <path d="M176 30 C182 30 183 28 184 22 L187 8 C188 3 190 2 196 2 H326 C332 2 334 3 335 8 L338 22 C339 28 340 30 346 30 Z" fill="#3a4250"/>
      <path d="M339 30 C343 30 344 29 344.5 25 L346 13 C346.5 10 348 9 351 9 H365 C368 9 369 10 369.5 13 L371 25 C371.5 29 372 30 376 30 Z" fill="#313946"/>
    </svg>
<div class="t" style="left:39.4px;top:212.86px;line-height:19.20px;font-size:16px;color:#b9bec5;transform:scaleX(0.9054);transform-origin:0 0;">Start</div>
<div class="t" style="left:193.5px;top:212.86px;line-height:19.20px;font-size:16px;color:#e3e6ea;transform:scaleX(0.9416);transform-origin:0 0;">Drawing2*</div>
<svg class="a" style="left:306px;top:216px;" width="12" height="12" viewBox="0 0 12 12"><path d="M1 1L11 11M11 1L1 11" stroke="#c8ccd2" stroke-width="1.8"/></svg>
<svg class="a" style="left:350px;top:218px;" width="12" height="12" viewBox="0 0 12 12"><path d="M6 1V11M1 6H11" stroke="#bfc3ca" stroke-width="2.2"/></svg>
<div class="a" style="left:0px;top:240px;width:281px;height:731px;background:#3b4453;"></div>
<div class="a" style="left:0px;top:243px;width:277px;height:26px;background:#2c333f;"></div>
<svg class="a" style="left:8px;top:250px;" width="4" height="13" viewBox="0 0 4 13"><rect x="0" y="0" width="1.2" height="1.2" fill="#c0c4ca"/><rect x="0" y="2.4" width="1.2" height="1.2" fill="#c0c4ca"/><rect x="0" y="4.8" width="1.2" height="1.2" fill="#c0c4ca"/><rect x="0" y="7.2" width="1.2" height="1.2" fill="#c0c4ca"/><rect x="0" y="9.6" width="1.2" height="1.2" fill="#c0c4ca"/><rect x="0" y="12" width="1.2" height="1.2" fill="#c0c4ca"/><rect x="2.4" y="0" width="1.2" height="1.2" fill="#c0c4ca"/><rect x="2.4" y="2.4" width="1.2" height="1.2" fill="#c0c4ca"/><rect x="2.4" y="4.8" width="1.2" height="1.2" fill="#c0c4ca"/><rect x="2.4" y="7.2" width="1.2" height="1.2" fill="#c0c4ca"/><rect x="2.4" y="9.6" width="1.2" height="1.2" fill="#c0c4ca"/><rect x="2.4" y="12" width="1.2" height="1.2" fill="#c0c4ca"/></svg>
<div class="t" style="left:18px;top:245.86px;line-height:19.20px;font-size:16px;color:#e6e8eb;transform:scaleX(0.7779);transform-origin:0 0;">PROPERTIES</div>
<div class="a" style="left:22px;top:286px;width:155px;height:28px;background:linear-gradient(90deg,#566070,#4b5565);border:1px solid #323946;"></div>
<div class="t" style="left:25.5px;top:289.86px;line-height:19.20px;font-size:16px;color:#e8eaed;transform:scaleX(0.9370);transform-origin:0 0;">No selection</div>
<svg class="a" style="left:162px;top:297px;" width="9" height="5" viewBox="0 0 9 5"><path d="M0 0H9L4.5 5Z" fill="#d6d9de"/></svg>
<svg class="a" style="left:188px;top:290px;" width="80" height="20" viewBox="0 0 80 20">
      <rect x="0" y="4" width="9" height="9" fill="#4c8ed0"/><rect x="4" y="8" width="9" height="9" fill="#9cc8f0" stroke="#1a2a3a" stroke-width=".6"/>
      <circle cx="11" cy="4.5" r="4" fill="#28a848"/><path d="M11 2V7M8.5 4.5H13.5" stroke="#e8ffe8" stroke-width="1.4"/>
      <circle cx="36" cy="9.5" r="3.2" fill="none" stroke="#d6d9de" stroke-width="1.3"/><path d="M36 1V6M36 13V18M28 9.5H33M39 9.5H44" stroke="#d6d9de" stroke-width="1.3"/>
      <circle cx="68" cy="9.5" r="3.2" fill="none" stroke="#d6d9de" stroke-width="1.3"/><path d="M68 3V6.5M60 9.5H65" stroke="#d6d9de" stroke-width="1.3"/><path d="M74 0L70 6H73L71 10L76 4H73Z" fill="#f5c460"/>
      <rect x="69" y="11" width="8" height="9" fill="#c8cacd"/><path d="M69 14H77M69 17H77M72 11V20M74.5 11V20" stroke="#777" stroke-width=".6"/>
    </svg>
<div class="a" style="left:4px;top:320px;width:5px;height:548px;background:#2c3340;"></div>
<div class="a" style="left:20px;top:319px;width:244px;height:26.5px;background:#2c323e;"></div>
<div class="t" style="left:29px;top:323.40px;line-height:18.00px;font-size:15px;color:#f0f2f4;font-weight:700;transform:scaleX(0.9664);transform-origin:0 0;">General</div>
<svg class="a" style="left:243.5px;top:328.5px;" width="11" height="6.5" viewBox="0 0 11 6.5"><path d="M0 0H11L5.5 6.5Z" fill="#dfe2e6"/></svg>
<div class="a" style="left:41px;top:345.7px;width:1.5px;height:182px;background:#323946;"></div>
<div class="a" style="left:43px;top:345.7px;width:220px;height:26px;background:#3d4655;"></div>
<div class="a" style="left:43px;top:370.7px;width:220px;height:1.3px;background:#333a46;"></div>
<div class="a" style="left:137.5px;top:345.7px;width:1.3px;height:26px;background:#333a46;"></div>
<div class="t" style="left:51px;top:349.63px;line-height:18.60px;font-size:15.5px;color:#dde0e4;transform:scaleX(0.8260);transform-origin:0 0;">Color</div>
<div class="a" style="left:143.5px;top:352.7px;width:12.5px;height:12.5px;background:#fff;border:1px solid #222;"></div>
<div class="t" style="left:163.3px;top:349.63px;line-height:18.60px;font-size:15.5px;color:#dde0e4;transform:scaleX(0.8879);transform-origin:0 0;">ByLayer</div>
<div class="a" style="left:43px;top:371.7px;width:220px;height:26px;background:#3d4655;"></div>
<div class="a" style="left:43px;top:396.7px;width:220px;height:1.3px;background:#333a46;"></div>
<div class="a" style="left:137.5px;top:371.7px;width:1.3px;height:26px;background:#333a46;"></div>
<div class="t" style="left:51px;top:375.63px;line-height:18.60px;font-size:15.5px;color:#dde0e4;transform:scaleX(0.8767);transform-origin:0 0;">Layer</div>
<div class="t" style="left:141px;top:375.63px;line-height:18.60px;font-size:15.5px;color:#dde0e4;">0</div>
<div class="a" style="left:43px;top:397.7px;width:220px;height:26px;background:#3d4655;"></div>
<div class="a" style="left:43px;top:422.7px;width:220px;height:1.3px;background:#333a46;"></div>
<div class="a" style="left:137.5px;top:397.7px;width:1.3px;height:26px;background:#333a46;"></div>
<div class="t" style="left:51px;top:401.63px;line-height:18.60px;font-size:15.5px;color:#dde0e4;transform:scaleX(0.9725);transform-origin:0 0;">Linetype</div>
<div class="a" style="left:144px;top:411.2px;width:54px;height:1.2px;background:#e6e8eb;"></div>
<div class="t" style="left:203.4px;top:401.63px;line-height:18.60px;font-size:15.5px;color:#dde0e4;transform:scaleX(0.8879);transform-origin:0 0;">ByLayer</div>
<div class="a" style="left:43px;top:423.7px;width:220px;height:26px;background:#3d4655;"></div>
<div class="a" style="left:43px;top:448.7px;width:220px;height:1.3px;background:#333a46;"></div>
<div class="a" style="left:137.5px;top:423.7px;width:1.3px;height:26px;background:#333a46;"></div>
<div class="t" style="left:51px;top:427.63px;line-height:18.60px;font-size:15.5px;color:#dde0e4;transform:scaleX(0.9452);transform-origin:0 0;">Linetype s...</div>
<div class="t" style="left:141px;top:427.63px;line-height:18.60px;font-size:15.5px;color:#dde0e4;">1</div>
<div class="a" style="left:43px;top:449.7px;width:220px;height:26px;background:#3d4655;"></div>
<div class="a" style="left:43px;top:474.7px;width:220px;height:1.3px;background:#333a46;"></div>
<div class="a" style="left:137.5px;top:449.7px;width:1.3px;height:26px;background:#333a46;"></div>
<div class="t" style="left:51px;top:453.63px;line-height:18.60px;font-size:15.5px;color:#dde0e4;">Lineweight</div>
<div class="a" style="left:144px;top:463.2px;width:54px;height:1.2px;background:#e6e8eb;"></div>
<div class="t" style="left:203.4px;top:453.63px;line-height:18.60px;font-size:15.5px;color:#dde0e4;transform:scaleX(0.8879);transform-origin:0 0;">ByLayer</div>
<div class="a" style="left:43px;top:475.7px;width:220px;height:26px;background:#3d4655;"></div>
<div class="a" style="left:43px;top:500.7px;width:220px;height:1.3px;background:#333a46;"></div>
<div class="a" style="left:137.5px;top:475.7px;width:1.3px;height:26px;background:#333a46;"></div>
<div class="t" style="left:51px;top:479.63px;line-height:18.60px;font-size:15.5px;color:#dde0e4;transform:scaleX(0.9157);transform-origin:0 0;">Transpare...</div>
<div class="t" style="left:141px;top:479.63px;line-height:18.60px;font-size:15.5px;color:#dde0e4;">ByLayer</div>
<div class="a" style="left:43px;top:501.7px;width:220px;height:26px;background:#3d4655;"></div>
<div class="a" style="left:43px;top:526.7px;width:220px;height:1.3px;background:#333a46;"></div>
<div class="a" style="left:137.5px;top:501.7px;width:1.3px;height:26px;background:#333a46;"></div>
<div class="t" style="left:51px;top:505.63px;line-height:18.60px;font-size:15.5px;color:#dde0e4;transform:scaleX(0.9315);transform-origin:0 0;">Thickness</div>
<div class="t" style="left:141px;top:505.63px;line-height:18.60px;font-size:15.5px;color:#dde0e4;">0</div>
<div class="a" style="left:20px;top:532px;width:244px;height:26.5px;background:#2c323e;"></div>
<div class="t" style="left:29px;top:536.40px;line-height:18.00px;font-size:15px;color:#f0f2f4;font-weight:700;transform:scaleX(0.9846);transform-origin:0 0;">3D Visualization</div>
<svg class="a" style="left:245.5px;top:539.5px;" width="7" height="11" viewBox="0 0 7 11"><path d="M7 0V11L0 5.5Z" fill="#dfe2e6"/></svg>
<div class="a" style="left:20px;top:563.5px;width:244px;height:26.5px;background:#2c323e;"></div>
<div class="t" style="left:29px;top:567.90px;line-height:18.00px;font-size:15px;color:#f0f2f4;font-weight:700;transform:scaleX(0.9747);transform-origin:0 0;">Plot style</div>
<svg class="a" style="left:243.5px;top:573.0px;" width="11" height="6.5" viewBox="0 0 11 6.5"><path d="M0 0H11L5.5 6.5Z" fill="#dfe2e6"/></svg>
<div class="a" style="left:41px;top:589.6px;width:1.5px;height:104px;background:#323946;"></div>
<div class="a" style="left:43px;top:589.6px;width:220px;height:26px;background:#3d4655;"></div>
<div class="a" style="left:43px;top:614.6px;width:220px;height:1.3px;background:#333a46;"></div>
<div class="a" style="left:137.5px;top:589.6px;width:1.3px;height:26px;background:#333a46;"></div>
<div class="t" style="left:51px;top:593.53px;line-height:18.60px;font-size:15.5px;color:#dde0e4;transform:scaleX(0.9540);transform-origin:0 0;">Plot style</div>
<div class="t" style="left:141px;top:593.53px;line-height:18.60px;font-size:15.5px;color:#9ba1a9;">ByColor</div>
<div class="a" style="left:43px;top:615.6px;width:220px;height:26px;background:#3d4655;"></div>
<div class="a" style="left:43px;top:640.6px;width:220px;height:1.3px;background:#333a46;"></div>
<div class="a" style="left:137.5px;top:615.6px;width:1.3px;height:26px;background:#333a46;"></div>
<div class="t" style="left:51px;top:619.53px;line-height:18.60px;font-size:15.5px;color:#dde0e4;transform:scaleX(0.9713);transform-origin:0 0;">Plot style t...</div>
<div class="t" style="left:141px;top:619.53px;line-height:18.60px;font-size:15.5px;color:#f0f2f4;">None</div>
<div class="a" style="left:43px;top:641.6px;width:220px;height:26px;background:#3d4655;"></div>
<div class="a" style="left:43px;top:666.6px;width:220px;height:1.3px;background:#333a46;"></div>
<div class="a" style="left:137.5px;top:641.6px;width:1.3px;height:26px;background:#333a46;"></div>
<div class="t" style="left:51px;top:645.53px;line-height:18.60px;font-size:15.5px;color:#dde0e4;transform:scaleX(0.9672);transform-origin:0 0;">Plot table...</div>
<div class="t" style="left:141px;top:645.53px;line-height:18.60px;font-size:15.5px;color:#9ba1a9;">Model</div>
<div class="a" style="left:43px;top:667.6px;width:220px;height:26px;background:#3d4655;"></div>
<div class="a" style="left:43px;top:692.6px;width:220px;height:1.3px;background:#333a46;"></div>
<div class="a" style="left:137.5px;top:667.6px;width:1.3px;height:26px;background:#333a46;"></div>
<div class="t" style="left:51px;top:671.53px;line-height:18.60px;font-size:15.5px;color:#dde0e4;transform:scaleX(0.9672);transform-origin:0 0;">Plot table...</div>
<div class="t" style="left:141px;top:671.53px;line-height:18.60px;font-size:15.5px;color:#9ba1a9;">Not available</div>
<div class="a" style="left:20px;top:698.3px;width:244px;height:26.5px;background:#2c323e;"></div>
<div class="t" style="left:29px;top:702.70px;line-height:18.00px;font-size:15px;color:#f0f2f4;font-weight:700;">View</div>
<svg class="a" style="left:243.5px;top:707.8px;" width="11" height="6.5" viewBox="0 0 11 6.5"><path d="M0 0H11L5.5 6.5Z" fill="#dfe2e6"/></svg>
<div class="a" style="left:41px;top:724.5px;width:1.5px;height:130px;background:#323946;"></div>
<div class="a" style="left:43px;top:724.5px;width:220px;height:26px;background:#3d4655;"></div>
<div class="a" style="left:43px;top:749.5px;width:220px;height:1.3px;background:#333a46;"></div>
<div class="a" style="left:137.5px;top:724.5px;width:1.3px;height:26px;background:#333a46;"></div>
<div class="t" style="left:51px;top:728.43px;line-height:18.60px;font-size:15.5px;color:#dde0e4;transform:scaleX(0.9318);transform-origin:0 0;">Center X</div>
<div class="t" style="left:141px;top:728.43px;line-height:18.60px;font-size:15.5px;color:#9ba1a9;">6735.2835</div>
<div class="a" style="left:43px;top:750.5px;width:220px;height:26px;background:#3d4655;"></div>
<div class="a" style="left:43px;top:775.5px;width:220px;height:1.3px;background:#333a46;"></div>
<div class="a" style="left:137.5px;top:750.5px;width:1.3px;height:26px;background:#333a46;"></div>
<div class="t" style="left:51px;top:754.43px;line-height:18.60px;font-size:15.5px;color:#dde0e4;transform:scaleX(0.9361);transform-origin:0 0;">Center Y</div>
<div class="t" style="left:141px;top:754.43px;line-height:18.60px;font-size:15.5px;color:#9ba1a9;">1408.8601</div>
<div class="a" style="left:43px;top:776.5px;width:220px;height:26px;background:#3d4655;"></div>
<div class="a" style="left:43px;top:801.5px;width:220px;height:1.3px;background:#333a46;"></div>
<div class="a" style="left:137.5px;top:776.5px;width:1.3px;height:26px;background:#333a46;"></div>
<div class="t" style="left:51px;top:780.43px;line-height:18.60px;font-size:15.5px;color:#dde0e4;transform:scaleX(0.9451);transform-origin:0 0;">Center Z</div>
<div class="t" style="left:141px;top:780.43px;line-height:18.60px;font-size:15.5px;color:#9ba1a9;">0</div>
<div class="a" style="left:43px;top:802.5px;width:220px;height:26px;background:#3d4655;"></div>
<div class="a" style="left:43px;top:827.5px;width:220px;height:1.3px;background:#333a46;"></div>
<div class="a" style="left:137.5px;top:802.5px;width:1.3px;height:26px;background:#333a46;"></div>
<div class="t" style="left:51px;top:806.43px;line-height:18.60px;font-size:15.5px;color:#dde0e4;transform:scaleX(1.0265);transform-origin:0 0;">Height</div>
<div class="t" style="left:141px;top:806.43px;line-height:18.60px;font-size:15.5px;color:#9ba1a9;">1667.9381</div>
<div class="a" style="left:43px;top:828.5px;width:220px;height:26px;background:#3d4655;"></div>
<div class="a" style="left:43px;top:853.5px;width:220px;height:1.3px;background:#333a46;"></div>
<div class="a" style="left:137.5px;top:828.5px;width:1.3px;height:26px;background:#333a46;"></div>
<div class="t" style="left:51px;top:832.43px;line-height:18.60px;font-size:15.5px;color:#dde0e4;transform:scaleX(1.0347);transform-origin:0 0;">Width</div>
<div class="t" style="left:141px;top:832.43px;line-height:18.60px;font-size:15.5px;color:#9ba1a9;">4192.8691</div>
<div class="a" style="left:20px;top:859.3px;width:244px;height:26.5px;background:#2c323e;"></div>
<div class="t" style="left:29px;top:863.70px;line-height:18.00px;font-size:15px;color:#f0f2f4;font-weight:700;transform:scaleX(0.9593);transform-origin:0 0;">Misc</div>
<svg class="a" style="left:243.5px;top:868.8px;" width="11" height="6.5" viewBox="0 0 11 6.5"><path d="M0 0H11L5.5 6.5Z" fill="#dfe2e6"/></svg>
<div class="a" style="left:41px;top:885.4px;width:1.5px;height:52px;background:#323946;"></div>
<div class="a" style="left:43px;top:885.4px;width:220px;height:26px;background:#3d4655;"></div>
<div class="a" style="left:43px;top:910.4px;width:220px;height:1.3px;background:#333a46;"></div>
<div class="a" style="left:137.5px;top:885.4px;width:1.3px;height:26px;background:#333a46;"></div>
<div class="t" style="left:51px;top:889.33px;line-height:18.60px;font-size:15.5px;color:#dde0e4;">Annotatio...</div>
<div class="t" style="left:141px;top:889.33px;line-height:18.60px;font-size:15.5px;color:#dde0e4;">1:1</div>
<div class="a" style="left:43px;top:911.4px;width:220px;height:26px;background:#3d4655;"></div>
<div class="a" style="left:43px;top:936.4px;width:220px;height:1.3px;background:#333a46;"></div>
<div class="a" style="left:137.5px;top:911.4px;width:1.3px;height:26px;background:#333a46;"></div>
<div class="t" style="left:51px;top:915.33px;line-height:18.60px;font-size:15.5px;color:#dde0e4;transform:scaleX(0.9312);transform-origin:0 0;">UCS icon...</div>
<div class="t" style="left:141px;top:915.33px;line-height:18.60px;font-size:15.5px;color:#dde0e4;">Yes</div>
<div class="a" style="left:41px;top:937.4px;width:1.5px;height:14px;background:#323946;"></div>
<div class="a" style="left:43px;top:937.4px;width:220px;height:14px;background:#3d4655;"></div>
<div class="a" style="left:137.5px;top:937.4px;width:1.3px;height:14px;background:#333a46;"></div>
<div class="a" style="left:43px;top:937.4px;width:220px;height:13.6px;overflow:hidden"><div class="t" style="left:8px;top:4.5px;line-height:18px;font-size:15px;color:#dde0e4">UCS icon a...</div><div class="t" style="left:98px;top:4.5px;line-height:18px;font-size:15px;color:#dde0e4">Yes</div></div>
<div class="a" style="left:0px;top:951px;width:281px;height:20px;background:#3b4453;"></div>
<div class="a" style="left:0px;top:971px;width:281px;height:1px;background:#4a5160;"></div>
<div class="a" style="left:0px;top:971px;width:281px;height:26px;background:#222934;"></div>
<svg class="a" style="left:0px;top:971px;" width="290" height="26" viewBox="0 0 290 26">
      <path d="M10 0 C15 0 16 2 17 6 L19 19 C20 23 22 24 26 24 H74 C78 24 80 23 81 19 L83 6 C84 2 85 0 90 0 Z" fill="#3b4453"/>
      <path d="M82 0 C87 0 88 2 89 6 L91 19 C92 23 94 24 98 24 H154 C158 24 160 23 161 19 L163 6 C164 2 165 0 170 0 Z" fill="#313946"/>
      <path d="M163 0 C168 0 169 2 170 6 L172 19 C173 23 175 24 179 24 H236 C240 24 242 23 243 19 L245 6 C246 2 247 0 252 0 Z" fill="#313946"/>
      <path d="M250 1 C254 1 255 3 256 7 L257 18 C258 22 260 23 263 23 H273 C276 23 278 22 279 18 L280 7 C281 3 282 1 285 1 Z" fill="#313946"/>
    </svg>
<div class="t" style="left:28px;top:973.30px;line-height:18.00px;font-size:15px;color:#f2f4f6;font-weight:700;transform:scaleX(1.0151);transform-origin:0 0;">Model</div>
<div class="t" style="left:101px;top:973.30px;line-height:18.00px;font-size:15px;color:#c9cdd3;transform:scaleX(0.9552);transform-origin:0 0;">Layout1</div>
<div class="t" style="left:182px;top:973.30px;line-height:18.00px;font-size:15px;color:#c9cdd3;transform:scaleX(0.9740);transform-origin:0 0;">Layout2</div>
<svg class="a" style="left:262px;top:977px;" width="12" height="12" viewBox="0 0 12 12"><path d="M6 1V11M1 6H11" stroke="#bfc3ca" stroke-width="2.2"/></svg>
<div class="a" style="left:281px;top:240px;width:1639px;height:652px;background:#212830;"></div>
<svg class="a" style="left:281px;top:240px;overflow:hidden" width="1639" height="652" viewBox="0 0 1639 652"><rect x="43.50" y="0" width="1" height="652" fill="#363d47"/><rect x="141.22" y="0" width="1" height="652" fill="#363d47"/><rect x="238.94" y="0" width="1" height="652" fill="#363d47"/><rect x="336.66" y="0" width="1" height="652" fill="#363d47"/><rect x="434.38" y="0" width="1" height="652" fill="#363d47"/><rect x="532.10" y="0" width="1" height="652" fill="#363d47"/><rect x="629.82" y="0" width="1" height="652" fill="#363d47"/><rect x="727.54" y="0" width="1" height="652" fill="#363d47"/><rect x="825.26" y="0" width="1" height="652" fill="#363d47"/><rect x="922.98" y="0" width="1" height="652" fill="#363d47"/><rect x="1020.70" y="0" width="1" height="652" fill="#363d47"/><rect x="1118.42" y="0" width="1" height="652" fill="#363d47"/><rect x="1216.14" y="0" width="1" height="652" fill="#363d47"/><rect x="1313.86" y="0" width="1" height="652" fill="#363d47"/><rect x="1411.58" y="0" width="1" height="652" fill="#363d47"/><rect x="1509.30" y="0" width="1" height="652" fill="#363d47"/><rect x="1607.02" y="0" width="1" height="652" fill="#363d47"/><rect x="0" y="95.20" width="1639" height="1" fill="#363d47"/><rect x="0" y="192.85" width="1639" height="1" fill="#363d47"/><rect x="0" y="290.50" width="1639" height="1" fill="#363d47"/><rect x="0" y="388.15" width="1639" height="1" fill="#363d47"/><rect x="0" y="485.80" width="1639" height="1" fill="#363d47"/><rect x="0" y="583.45" width="1639" height="1" fill="#363d47"/></svg>
<div class="t" style="left:285px;top:246.80px;line-height:18.00px;font-size:15px;color:#c8ccd1;transform:scaleX(0.7666);transform-origin:0 0;">[ − ]</div>
<div class="t" style="left:307px;top:246.80px;line-height:18.00px;font-size:15px;color:#d8dbdf;transform:scaleX(0.9683);transform-origin:0 0;">[Top]</div>
<div class="t" style="left:341px;top:246.80px;line-height:18.00px;font-size:15px;color:#d8dbdf;transform:scaleX(0.9766);transform-origin:0 0;">[2D Wireframe]</div>
<svg class="a" style="left:281px;top:240px;" width="1639" height="652" viewBox="0 0 1639 652"><path d="M335.3 153.5 H524.8 V286.2 H695.2 V464.8 H838" fill="none" stroke="#e4e6e9" stroke-width="1.5"/></svg>
<svg class="a" style="left:1140px;top:628px;" width="110" height="110" viewBox="0 0 110 110"><path d="M53.4 5.3V49.9M53.4 57V102M5.2 53.4H49.9M57 53.4H102" stroke="#f2f2f2" stroke-width="1.3"/><rect x="49.9" y="49.9" width="7" height="7" fill="none" stroke="#f2f2f2" stroke-width="1.3"/></svg>
<svg class="a" style="left:290px;top:790px;" width="100" height="95" viewBox="0 0 100 95">
      <path d="M9.5 22V84M9.5 84H72" stroke="#eceef0" stroke-width="1.3"/>
      <rect x="4" y="78" width="11.5" height="11.5" fill="none" stroke="#eceef0" stroke-width="1.3"/>
      <path d="M11 3.4L18.3 10.3L25.7 3.4M18.3 10.3V17.9" stroke="#eceef0" stroke-width="1.3" fill="none"/>
      <path d="M76.5 68.5L91 83M91 68.5L76.5 83" stroke="#eceef0" stroke-width="1.3"/>
    </svg>
<svg class="a" style="left:1780px;top:250px;" width="135" height="175" viewBox="0 0 135 175">
      <circle cx="65.2" cy="65" r="47.5" fill="none" stroke="#48505c" stroke-width="13"/>
      <rect x="41.2" y="41.3" width="47" height="47" fill="#b9bdc2"/>
      <rect x="50" y="50" width="29.5" height="29.5" fill="#a9adb2"/>
      <text x="65.2" y="70" text-anchor="middle" font-family="Liberation Sans" font-weight="700" font-size="12" fill="#575d66" transform="scale(.92,1) translate(5.6,0)">TOP</text>
      <text x="65.2" y="21" text-anchor="middle" font-family="Liberation Sans" font-weight="700" font-size="18" fill="#c2c6cb">N</text>
      <text x="65.2" y="125" text-anchor="middle" font-family="Liberation Sans" font-weight="700" font-size="18" fill="#c2c6cb">S</text>
      <text x="14" y="72" text-anchor="middle" font-family="Liberation Sans" font-weight="700" font-size="18" fill="#c2c6cb">W</text>
      <text x="116" y="72" text-anchor="middle" font-family="Liberation Sans" font-weight="700" font-size="18" fill="#c2c6cb">E</text>
      <rect x="35" y="145.3" width="56.4" height="20.2" rx="5" fill="#9ea4ac" stroke="#b8bdc3" stroke-width="1"/>
      <text x="41" y="160.5" font-family="Liberation Sans" font-size="13" fill="#5d636b">WCS</text>
      <path d="M74 152.5H84L79 158Z" fill="none" stroke="#6a7078" stroke-width="1"/>
    </svg>
<svg class="a" style="left:1877px;top:446px;" width="41" height="259" viewBox="0 0 41 259">
      <rect x="0.5" y="0.5" width="40" height="258" rx="4" fill="#575e68"/>
      <g fill="none" stroke="#454b54" stroke-width="1.2">
        <rect x="33" y="4" width="5" height="5"/>
        <path d="M12 20 C8 26 10 38 20 38 C30 38 32 26 28 20 C26 16 14 16 12 20Z"/>
        <circle cx="20" cy="30" r="6"/><path d="M10 42 H30"/>
        <path d="M19 56H22"/>
        <path d="M12 95 C6 85 7 78 11 82 L11 72 C11 68 15 68 15 72 L15 70 C15 66 19 66 19 70 L19 71 C19 67 23 67 23 71 L23 74 C23 70 27 70 27 74 L27 88 C27 94 22 98 17 98Z"/>
        <path d="M9 108 L28 127M9 127 L22 114M9 108v3M9 108h3M28 108l-3 3"/><circle cx="26" cy="124" r="4"/><path d="M29 127 L33 131"/>
        <path d="M19 140H22"/>
        <path d="M21 154 V172 M16 158 L21 152 L26 158"/><ellipse cx="21" cy="166" rx="10" ry="4"/>
        <path d="M19 188H22"/>
        <rect x="7" y="200" width="7" height="8"/><rect x="15" y="200" width="7" height="8"/><rect x="23" y="200" width="7" height="8"/>
        <rect x="7" y="211" width="21" height="14"/><path d="M13 214 L20 218 L13 222Z"/>
        <circle cx="33" cy="252" r="3"/>
      </g>
    </svg>
<div class="a" style="left:1201.3px;top:694.7px;width:184.8px;height:56.8px;background:transparent;border:5px solid #e5242b;"></div>
<div class="a" style="left:1206.3px;top:699.7px;width:174.8px;height:46.8px;background:#262d38;"></div>
<div class="a" style="left:1210px;top:700px;width:54px;height:23px;background:#ffffff;"></div>
<div class="t" style="left:1215.3px;top:701.50px;line-height:18.00px;font-size:15px;color:#2a2a2a;transform:scaleX(0.7494);transform-origin:0 0;">PE</div>
<div class="a" style="left:1230.8px;top:704px;width:1.2px;height:16px;background:#111;"></div>
<div class="a" style="left:1210px;top:724px;width:171px;height:1.3px;background:#8a9099;"></div>
<div class="a" style="left:1210px;top:725.3px;width:171px;height:20.4px;background:#2b323d;"></div>
<svg class="a" style="left:1213px;top:728px;" width="22" height="15" viewBox="0 0 22 15"><path d="M1 13 L9 5 L12 8 L4 15Z" fill="#f0c864"/><path d="M9 5 L11 3 L14 6 L12 8Z" fill="#e05a5a"/><path d="M0 14.5H14" stroke="#ddd" stroke-width="1"/><path d="M13 14.5 C20 14 20 3 15 2" fill="none" stroke="#ddd" stroke-width="1"/></svg>
<div class="t" style="left:1238.8px;top:726.86px;line-height:19.20px;font-size:16px;color:#eceef0;transform:scaleX(0.8078);transform-origin:0 0;">PE (PEDIT)</div>
<div class="a" style="left:1209px;top:751.5px;width:175px;height:112px;background:#3d4553;border:1px solid #656b73;border-top:none;"></div>
<svg class="a" style="left:1214.5px;top:753px;" width="19" height="12" viewBox="0 0 19 12"><rect x=".5" y=".5" width="18" height="12" fill="#2e4258" stroke="#a0a6ae" stroke-width="1"/><text x="9.5" y="9.5" text-anchor="middle" font-family="Liberation Sans" font-size="8" fill="#7eb8e8">(::)</text></svg>
<svg class="a" style="left:1214.5px;top:776px;" width="19" height="12" viewBox="0 0 19 12"><rect x=".5" y=".5" width="18" height="12" fill="#2e4258" stroke="#a0a6ae" stroke-width="1"/><text x="9.5" y="9.5" text-anchor="middle" font-family="Liberation Sans" font-size="8" fill="#7eb8e8">(::)</text></svg>
<svg class="a" style="left:1214.5px;top:799px;" width="19" height="12" viewBox="0 0 19 12"><rect x=".5" y=".5" width="18" height="12" fill="#2e4258" stroke="#a0a6ae" stroke-width="1"/><text x="9.5" y="9.5" text-anchor="middle" font-family="Liberation Sans" font-size="8" fill="#7eb8e8">(::)</text></svg>
<svg class="a" style="left:1214.5px;top:822px;" width="19" height="12" viewBox="0 0 19 12"><rect x=".5" y=".5" width="18" height="12" fill="#2e4258" stroke="#a0a6ae" stroke-width="1"/><text x="9.5" y="9.5" text-anchor="middle" font-family="Liberation Sans" font-size="8" fill="#7eb8e8">(::)</text></svg>
<svg class="a" style="left:1214.5px;top:845px;" width="19" height="12" viewBox="0 0 19 12"><rect x=".5" y=".5" width="18" height="12" fill="#2e4258" stroke="#a0a6ae" stroke-width="1"/><text x="9.5" y="9.5" text-anchor="middle" font-family="Liberation Sans" font-size="8" fill="#7eb8e8">(::)</text></svg>
<div class="t" style="left:1238.5px;top:750.86px;line-height:19.20px;font-size:16px;color:#e6e8eb;transform:scaleX(0.7766);transform-origin:0 0;">PERSPECTIVE</div>
<div class="t" style="left:1238.5px;top:773.86px;line-height:19.20px;font-size:16px;color:#e6e8eb;transform:scaleX(0.8121);transform-origin:0 0;">PEDITACCEPT</div>
<div class="t" style="left:1238.5px;top:796.86px;line-height:19.20px;font-size:16px;color:#e6e8eb;transform:scaleX(0.7539);transform-origin:0 0;">PELLIPSE</div>
<div class="t" style="left:1238.5px;top:819.86px;line-height:19.20px;font-size:16px;color:#e6e8eb;transform:scaleX(0.7928);transform-origin:0 0;">PERIMETER</div>
<div class="t" style="left:1238.5px;top:842.86px;line-height:19.20px;font-size:16px;color:#e6e8eb;transform:scaleX(0.7723);transform-origin:0 0;">PERSPECTIVECLIP</div>
<div class="a" style="left:281px;top:892px;width:1639px;height:4px;background:#3a4250;"></div>
<div class="a" style="left:281px;top:896px;width:1639px;height:75px;background:#2b323d;"></div>
<div class="a" style="left:312px;top:897px;width:1608px;height:47px;background:#c9c9ca;"></div>
<div class="a" style="left:312px;top:944px;width:1608px;height:1.3px;background:#2b323d;"></div>
<div class="a" style="left:312px;top:945px;width:1608px;height:25px;background:#ffffff;"></div>
<div class="t" style="left:315px;top:906.70px;line-height:18.00px;font-size:15px;color:#111111;font-family:'Liberation Mono',monospace;">Specify next point or [Arc/Close/Halfwidth/Length/Undo/Width]:</div>
<div class="t" style="left:315px;top:926.20px;line-height:18.00px;font-size:15px;color:#111111;font-family:'Liberation Mono',monospace;">Specify next point or [Arc/Close/Halfwidth/Length/Undo/Width]: *Cancel*</div>
<svg class="a" style="left:286px;top:902px;" width="22" height="8" viewBox="0 0 22 8"><rect x="0.0" y="0" width="2.2" height="2.2" fill="#e8eaed"/><rect x="0.0" y="4" width="2.2" height="2.2" fill="#e8eaed"/><rect x="3.85" y="0" width="2.2" height="2.2" fill="#e8eaed"/><rect x="3.85" y="4" width="2.2" height="2.2" fill="#e8eaed"/><rect x="7.7" y="0" width="2.2" height="2.2" fill="#e8eaed"/><rect x="7.7" y="4" width="2.2" height="2.2" fill="#e8eaed"/><rect x="11.55" y="0" width="2.2" height="2.2" fill="#e8eaed"/><rect x="11.55" y="4" width="2.2" height="2.2" fill="#e8eaed"/><rect x="15.4" y="0" width="2.2" height="2.2" fill="#e8eaed"/><rect x="15.4" y="4" width="2.2" height="2.2" fill="#e8eaed"/><rect x="19.25" y="0" width="2.2" height="2.2" fill="#e8eaed"/><rect x="19.25" y="4" width="2.2" height="2.2" fill="#e8eaed"/></svg>
<svg class="a" style="left:289px;top:917px;" width="13" height="13" viewBox="0 0 13 13"><path d="M1 1L12 12M12 1L1 12" stroke="#e6e8eb" stroke-width="2"/></svg>
<svg class="a" style="left:285px;top:941px;" width="22" height="22" viewBox="0 0 22 22"><path d="M2.5 18.5 L11.5 9.5" stroke="#e6e8eb" stroke-width="3.2" stroke-linecap="round"/><path d="M15.5 1.5 A4.2 4.2 0 1 0 19.7 5.7" fill="none" stroke="#e6e8eb" stroke-width="3"/></svg>
<svg class="a" style="left:317px;top:949px;" width="32" height="17" viewBox="0 0 32 17"><rect x=".5" y=".5" width="19" height="15" fill="#e8e8e8" stroke="#6a6a6a" stroke-width="1"/><rect x=".5" y=".5" width="19" height="3" fill="#6a6a6a"/><path d="M3 7L6 9L3 11M7 12H11" stroke="#555" stroke-width=".9" fill="none"/><path d="M22 5.5H31L26.5 10.5Z" fill="#555"/></svg>
<div class="t" style="left:358.8px;top:950.00px;line-height:18.00px;font-size:15px;color:#8a8a8a;font-family:'Liberation Mono',monospace;font-style:italic;">Type a command</div>
<div class="a" style="left:1181px;top:998px;width:59px;height:30px;background:#3b4453;"></div>
<div class="t" style="left:1185.6px;top:1004.60px;line-height:18.00px;font-size:15px;color:#eef0f2;transform:scaleX(0.9448);transform-origin:0 0;">MODEL</div>
<div class="a" style="left:1243.6px;top:998px;width:28.40000000000009px;height:30px;background:#5b88bf;"></div>
<svg class="a" style="left:1247px;top:1002px;" width="22" height="22" viewBox="0 0 22 22"><path d="M6 2V20M11 2V20M16 2V20M2 6H20M2 11H20M2 16H20" stroke="#f2f6fa" stroke-width="1.3"/></svg>
<div class="a" style="left:1272px;top:998px;width:50px;height:30px;background:#3b4453;"></div>
<svg class="a" style="left:1280px;top:1005px;" width="16" height="16" viewBox="0 0 16 16"><rect x="0.0" y="0.0" width="3" height="3" fill="#dfe2e6"/><rect x="0.0" y="5.6" width="3" height="3" fill="#dfe2e6"/><rect x="0.0" y="11.2" width="3" height="3" fill="#dfe2e6"/><rect x="5.6" y="0.0" width="3" height="3" fill="#dfe2e6"/><rect x="5.6" y="5.6" width="3" height="3" fill="#dfe2e6"/><rect x="5.6" y="11.2" width="3" height="3" fill="#dfe2e6"/><rect x="11.2" y="0.0" width="3" height="3" fill="#dfe2e6"/><rect x="11.2" y="5.6" width="3" height="3" fill="#dfe2e6"/><rect x="11.2" y="11.2" width="3" height="3" fill="#dfe2e6"/></svg>
<svg class="a" style="left:1308px;top:1011px;" width="9" height="5" viewBox="0 0 9 5"><path d="M0 0H9L4.5 5Z" fill="#dfe2e6"/></svg>
<div class="a" style="left:1325.3px;top:998px;width:127.70000000000005px;height:30px;background:#3b4453;"></div>
<svg class="a" style="left:1329px;top:1003px;" width="22" height="20" viewBox="0 0 22 20"><path d="M2 1V19H21" fill="none" stroke="#e6e8eb" stroke-width="1.2"/><rect x="2" y="13" width="6" height="6" fill="none" stroke="#e6e8eb" stroke-width="1"/></svg>
<div class="a" style="left:1356px;top:998px;width:28px;height:30px;background:#5b88bf;"></div>
<svg class="a" style="left:1358px;top:1002px;" width="24" height="22" viewBox="0 0 24 22"><circle cx="10" cy="12" r="7.5" fill="none" stroke="#eef2f8" stroke-width="1.3"/><path d="M10 12 L20 3 M10 12 H22" stroke="#eef2f8" stroke-width="1.3"/></svg>
<svg class="a" style="left:1389.5px;top:1011px;" width="9" height="5" viewBox="0 0 9 5"><path d="M0 0H9L4.5 5Z" fill="#dfe2e6"/></svg>
<svg class="a" style="left:1407px;top:1003px;" width="22" height="20" viewBox="0 0 22 20"><path d="M3 2 L19 18" stroke="#c84a4a" stroke-width="1.2"/><path d="M11 1V19" stroke="#58b070" stroke-width="1.2"/><rect x="9" y="8" width="4" height="4" fill="#3b4453" stroke="#e6e8eb" stroke-width="1"/></svg>
<svg class="a" style="left:1438.5px;top:1011px;" width="9" height="5" viewBox="0 0 9 5"><path d="M0 0H9L4.5 5Z" fill="#dfe2e6"/></svg>
<div class="a" style="left:1454.7px;top:998px;width:28.09999999999991px;height:30px;background:#5b88bf;"></div>
<svg class="a" style="left:1458px;top:1004px;" width="22" height="18" viewBox="0 0 22 18"><path d="M2 16 L17 2 M2 16.5 H21" stroke="#eef2f8" stroke-width="1.3"/><rect x="8" y="8" width="4" height="4" fill="#eef2f8"/></svg>
<div class="a" style="left:1485px;top:998px;width:28px;height:30px;background:#5b88bf;"></div>
<svg class="a" style="left:1488px;top:1002px;" width="22" height="22" viewBox="0 0 22 22"><rect x="5" y="5" width="16" height="16" fill="none" stroke="#eef2f8" stroke-width="1.3"/><rect x="1" y="1" width="7" height="7" fill="#5b88bf" stroke="#eef2f8" stroke-width="1.2"/></svg>
<div class="a" style="left:1513px;top:998px;width:17px;height:30px;background:#3b4453;"></div>
<svg class="a" style="left:1518px;top:1011px;" width="9" height="5" viewBox="0 0 9 5"><path d="M0 0H9L4.5 5Z" fill="#dfe2e6"/></svg>
<div class="a" style="left:1535px;top:998px;width:28px;height:30px;background:#5b88bf;"></div>
<svg class="a" style="left:1537px;top:1004px;" width="22" height="18" viewBox="0 0 22 18"><rect x="0" y="2" width="10" height="4" fill="#fff"/><rect x="0" y="7.5" width="10" height="4" fill="#fff"/><rect x="0" y="13" width="10" height="4" fill="#fff"/><path d="M10 3H20M10 9H20M10 15H20" stroke="#dff0ff" stroke-width="1.5"/></svg>
<div class="a" style="left:1567.7px;top:998px;width:28.299999999999955px;height:30px;background:#5b88bf;"></div>
<svg class="a" style="left:1571px;top:1002px;" width="22" height="22" viewBox="0 0 22 22"><path d="M9 3 L13 12 L11 13 L18 20 L9 17 L0 20 L7 13 L5 12Z" fill="#f4f6f8"/><circle cx="16" cy="6" r="3.6" fill="none" stroke="#e8f2ff" stroke-width="1.2"/></svg>
<div class="a" style="left:1596px;top:998px;width:102.40000000000009px;height:30px;background:#3b4453;"></div>
<svg class="a" style="left:1603px;top:1002px;" width="22" height="22" viewBox="0 0 22 22"><path d="M9 3 L13 12 L11 13 L18 20 L9 17 L0 20 L7 13 L5 12Z" fill="#e0e2e5"/><path d="M18 2L14 8H17L15 12L21 6H18Z" fill="#e0e2e5"/></svg>
<svg class="a" style="left:1633px;top:1002px;" width="22" height="22" viewBox="0 0 22 22"><path d="M9 3 L13 12 L11 13 L18 20 L9 17 L0 20 L7 13 L5 12Z" fill="#e0e2e5"/></svg>
<div class="t" style="left:1663px;top:1005.30px;line-height:18.00px;font-size:15px;color:#e6e8eb;transform:scaleX(0.7479);transform-origin:0 0;">1:1</div>
<svg class="a" style="left:1684px;top:1011px;" width="9" height="5" viewBox="0 0 9 5"><path d="M0 0H9L4.5 5Z" fill="#dfe2e6"/></svg>
<div class="a" style="left:1701.4px;top:998px;width:48.59999999999991px;height:30px;background:#3b4453;"></div>
<svg class="a" style="left:1705px;top:1003px;" width="21" height="21" viewBox="0 0 21 21"><g transform="translate(10.5,10.5)"><rect x="-2.5" y="-10" width="5" height="5" fill="#e0e2e5" transform="rotate(0)"/><rect x="-2.5" y="-10" width="5" height="5" fill="#e0e2e5" transform="rotate(45)"/><rect x="-2.5" y="-10" width="5" height="5" fill="#e0e2e5" transform="rotate(90)"/><rect x="-2.5" y="-10" width="5" height="5" fill="#e0e2e5" transform="rotate(135)"/><rect x="-2.5" y="-10" width="5" height="5" fill="#e0e2e5" transform="rotate(180)"/><rect x="-2.5" y="-10" width="5" height="5" fill="#e0e2e5" transform="rotate(225)"/><rect x="-2.5" y="-10" width="5" height="5" fill="#e0e2e5" transform="rotate(270)"/><rect x="-2.5" y="-10" width="5" height="5" fill="#e0e2e5" transform="rotate(315)"/><circle r="7" fill="#e0e2e5"/><circle r="3" fill="#3b4453"/></g></svg>
<svg class="a" style="left:1736px;top:1011px;" width="9" height="5" viewBox="0 0 9 5"><path d="M0 0H9L4.5 5Z" fill="#dfe2e6"/></svg>
<div class="a" style="left:1751px;top:998px;width:29.59999999999991px;height:30px;background:#3b4453;"></div>
<svg class="a" style="left:1756px;top:1003px;" width="20" height="20" viewBox="0 0 20 20"><path d="M10 1V19M1 10H19" stroke="#e6e8eb" stroke-width="2.6"/></svg>
<div class="a" style="left:1784.6px;top:998px;width:30.40000000000009px;height:30px;background:#3b4453;"></div>
<svg class="a" style="left:1789px;top:1002px;" width="21" height="22" viewBox="0 0 21 22"><rect x="1" y="1" width="7" height="7" fill="none" stroke="#d8dbe0" stroke-width="1.1"/><circle cx="15" cy="9" r="4.5" fill="none" stroke="#d8dbe0" stroke-width="1.1"/><path d="M2 20 L6 13 L10 20Z" fill="none" stroke="#d8dbe0" stroke-width="1.1"/></svg>
<div class="a" style="left:1818px;top:998px;width:38px;height:30px;background:#3b4453;"></div>
<svg class="a" style="left:1826px;top:1003px;" width="22" height="20" viewBox="0 0 22 20"><rect x="5" y="1" width="12" height="6" fill="none" stroke="#e0e2e5" stroke-width="1.4"/><rect x="1" y="6" width="20" height="9" rx="1.5" fill="none" stroke="#e0e2e5" stroke-width="1.6"/><rect x="5" y="12" width="12" height="6" fill="#f0b088" stroke="#e0e2e5" stroke-width="1"/></svg>
<div class="a" style="left:1859px;top:998px;width:61px;height:30px;background:#3b4453;"></div>
<svg class="a" style="left:1864px;top:1004px;" width="21" height="18" viewBox="0 0 21 18"><rect x="1" y="1" width="19" height="15" fill="none" stroke="#d8dbe0" stroke-width="1.1"/><path d="M5 13L9 9M5 13V10M5 13H8M16 4L12 8M16 4V7M16 4H13" stroke="#d8dbe0" stroke-width="1.1" fill="none"/></svg>
<svg class="a" style="left:1894px;top:1004px;" width="21" height="18" viewBox="0 0 21 18"><rect x="0" y="1" width="21" height="2.4" fill="#e6e8eb"/><rect x="0" y="8" width="21" height="2.4" fill="#e6e8eb"/><rect x="0" y="15" width="21" height="2.4" fill="#e6e8eb"/></svg>
</body></html>
